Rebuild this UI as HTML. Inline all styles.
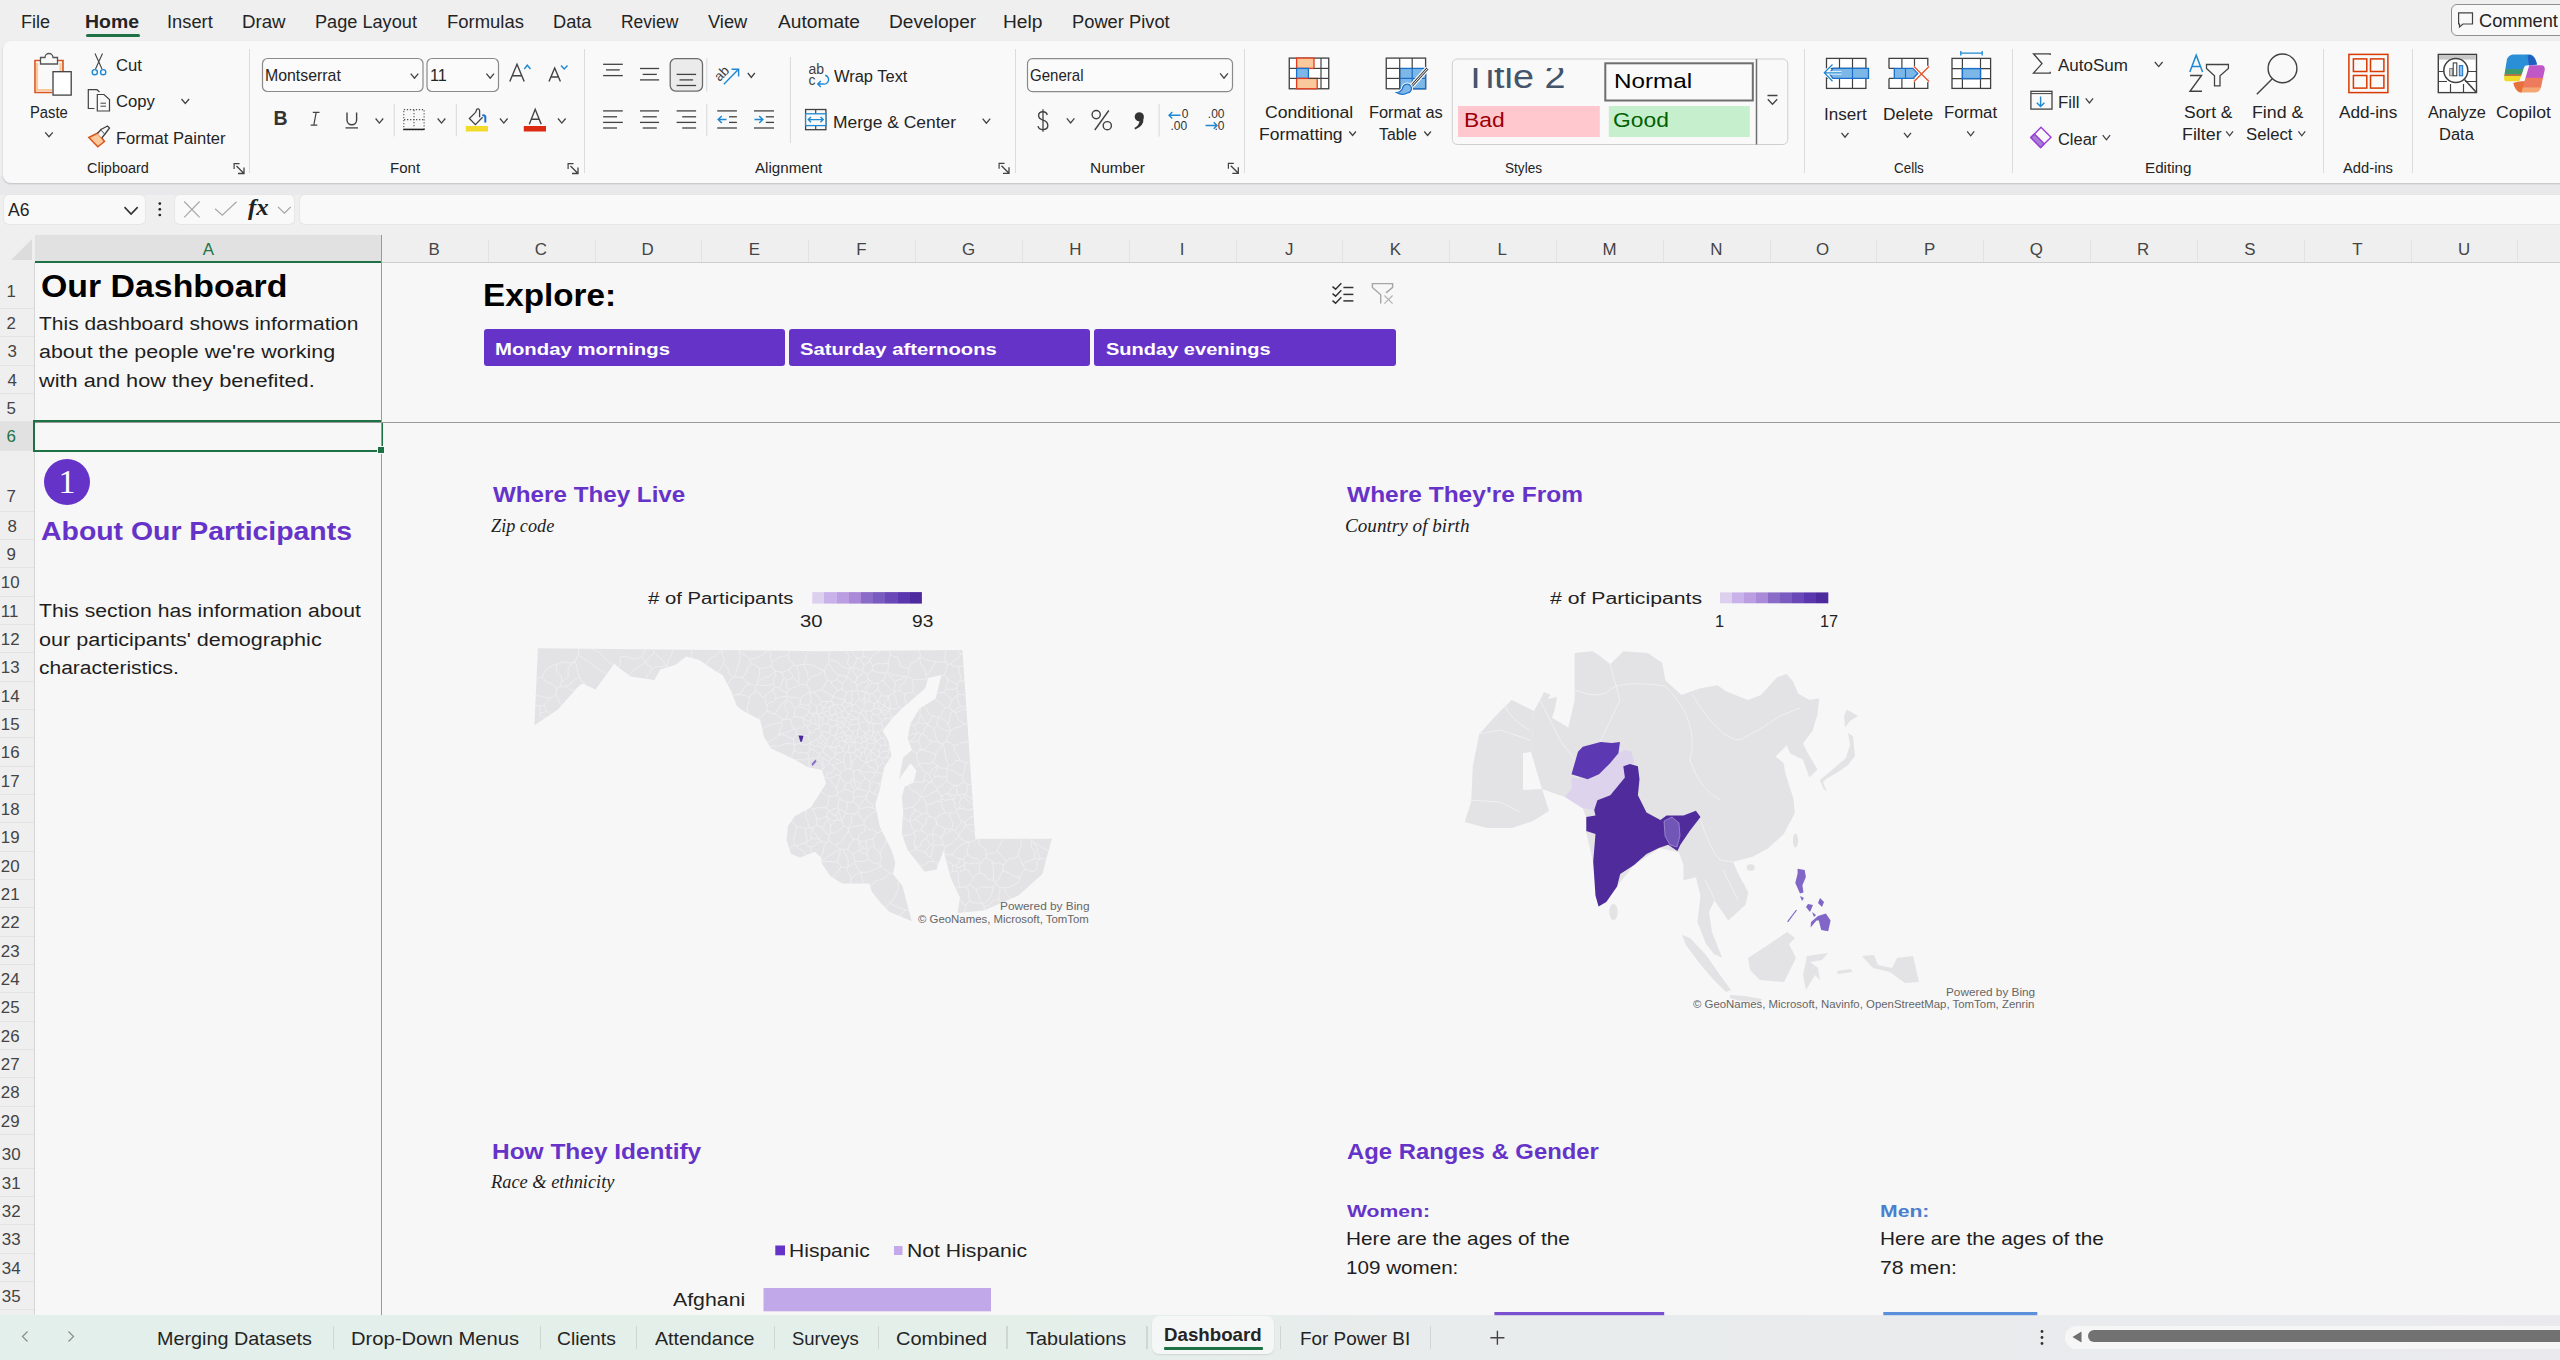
<!DOCTYPE html>
<html><head><meta charset="utf-8"><style>
html,body{margin:0;padding:0;width:2560px;height:1360px;overflow:hidden;background:#efeff0;position:relative}
.t{position:absolute;white-space:nowrap}
</style></head><body>
<div style='position:absolute;left:0px;top:176px;width:2560px;height:19px;background:#e9e9ec'></div>
<div style='position:absolute;left:3px;top:41px;width:2600px;height:141.5px;background:#f9f9f9;border-radius:8px;box-shadow:0 1px 2px rgba(0,0,0,0.18)'></div>
<div style='position:absolute;left:86px;top:34px;width:54px;height:3px;background:#1e7145;border-radius:2px'></div>
<div style='position:absolute;left:2450.5px;top:3.8px;width:140px;height:32px;border:1.2px solid #8f8f8f;border-radius:6px;background:#f8f8f8;box-sizing:border-box'></div>
<div style='position:absolute;left:249.3px;top:49px;width:1px;height:124px;background:#dcdcdc'></div>
<div style='position:absolute;left:583.5px;top:49px;width:1px;height:124px;background:#dcdcdc'></div>
<div style='position:absolute;left:1014.8px;top:49px;width:1px;height:124px;background:#dcdcdc'></div>
<div style='position:absolute;left:1243.8px;top:49px;width:1px;height:124px;background:#dcdcdc'></div>
<div style='position:absolute;left:1804.2px;top:49px;width:1px;height:124px;background:#dcdcdc'></div>
<div style='position:absolute;left:2012.3px;top:49px;width:1px;height:124px;background:#dcdcdc'></div>
<div style='position:absolute;left:2323.2px;top:49px;width:1px;height:124px;background:#dcdcdc'></div>
<div style='position:absolute;left:2412.2px;top:49px;width:1px;height:124px;background:#dcdcdc'></div>
<div style='position:absolute;left:4px;top:195px;width:141px;height:29px;background:#f9f9f9;border-radius:5px;box-shadow:0 0 0 1px #e6e6e6'></div>
<div style='position:absolute;left:175px;top:195px;width:119px;height:29px;background:#f9f9f9;border-radius:5px;box-shadow:0 0 0 1px #e6e6e6'></div>
<div style='position:absolute;left:300px;top:195px;width:2300px;height:29px;background:#f9f9f9;border-radius:5px;box-shadow:0 0 0 1px #e6e6e6'></div>
<div style='position:absolute;left:35px;top:262.5px;width:2525px;height:1053px;background:#f7f7f7'></div>
<div style='position:absolute;left:35px;top:235px;width:346px;height:27px;background:#e1e1e1'></div>
<div style='position:absolute;left:35px;top:260.5px;width:346px;height:2px;background:#1e7145'></div>
<div style='position:absolute;left:381px;top:262px;width:2179px;height:1px;background:#cfcfcf'></div>
<div style='position:absolute;left:487.82px;top:240px;width:1px;height:22px;background:#e2e2e2'></div>
<div style='position:absolute;left:594.64px;top:240px;width:1px;height:22px;background:#e2e2e2'></div>
<div style='position:absolute;left:701.46px;top:240px;width:1px;height:22px;background:#e2e2e2'></div>
<div style='position:absolute;left:808.28px;top:240px;width:1px;height:22px;background:#e2e2e2'></div>
<div style='position:absolute;left:915.0999999999999px;top:240px;width:1px;height:22px;background:#e2e2e2'></div>
<div style='position:absolute;left:1021.92px;top:240px;width:1px;height:22px;background:#e2e2e2'></div>
<div style='position:absolute;left:1128.74px;top:240px;width:1px;height:22px;background:#e2e2e2'></div>
<div style='position:absolute;left:1235.56px;top:240px;width:1px;height:22px;background:#e2e2e2'></div>
<div style='position:absolute;left:1342.3799999999999px;top:240px;width:1px;height:22px;background:#e2e2e2'></div>
<div style='position:absolute;left:1449.1999999999998px;top:240px;width:1px;height:22px;background:#e2e2e2'></div>
<div style='position:absolute;left:1556.02px;top:240px;width:1px;height:22px;background:#e2e2e2'></div>
<div style='position:absolute;left:1662.84px;top:240px;width:1px;height:22px;background:#e2e2e2'></div>
<div style='position:absolute;left:1769.6599999999999px;top:240px;width:1px;height:22px;background:#e2e2e2'></div>
<div style='position:absolute;left:1876.48px;top:240px;width:1px;height:22px;background:#e2e2e2'></div>
<div style='position:absolute;left:1983.3px;top:240px;width:1px;height:22px;background:#e2e2e2'></div>
<div style='position:absolute;left:2090.12px;top:240px;width:1px;height:22px;background:#e2e2e2'></div>
<div style='position:absolute;left:2196.9399999999996px;top:240px;width:1px;height:22px;background:#e2e2e2'></div>
<div style='position:absolute;left:2303.7599999999998px;top:240px;width:1px;height:22px;background:#e2e2e2'></div>
<div style='position:absolute;left:2410.58px;top:240px;width:1px;height:22px;background:#e2e2e2'></div>
<div style='position:absolute;left:2517.3999999999996px;top:240px;width:1px;height:22px;background:#e2e2e2'></div>
<div style='position:absolute;left:34px;top:262px;width:1px;height:1053px;background:#d6d6d6'></div>
<div style='position:absolute;left:0px;top:308.0px;width:34px;height:1px;background:#e3e3e3'></div>
<div style='position:absolute;left:0px;top:336.33299999999997px;width:34px;height:1px;background:#e3e3e3'></div>
<div style='position:absolute;left:0px;top:364.66599999999994px;width:34px;height:1px;background:#e3e3e3'></div>
<div style='position:absolute;left:0px;top:392.9989999999999px;width:34px;height:1px;background:#e3e3e3'></div>
<div style='position:absolute;left:0px;top:421.3319999999999px;width:34px;height:1px;background:#e3e3e3'></div>
<div style='position:absolute;left:0px;top:449.66499999999985px;width:34px;height:1px;background:#e3e3e3'></div>
<div style='position:absolute;left:0px;top:510.66499999999985px;width:34px;height:1px;background:#e3e3e3'></div>
<div style='position:absolute;left:0px;top:538.9979999999998px;width:34px;height:1px;background:#e3e3e3'></div>
<div style='position:absolute;left:0px;top:567.3309999999998px;width:34px;height:1px;background:#e3e3e3'></div>
<div style='position:absolute;left:0px;top:595.6639999999998px;width:34px;height:1px;background:#e3e3e3'></div>
<div style='position:absolute;left:0px;top:623.9969999999997px;width:34px;height:1px;background:#e3e3e3'></div>
<div style='position:absolute;left:0px;top:652.3299999999997px;width:34px;height:1px;background:#e3e3e3'></div>
<div style='position:absolute;left:0px;top:680.6629999999997px;width:34px;height:1px;background:#e3e3e3'></div>
<div style='position:absolute;left:0px;top:708.9959999999996px;width:34px;height:1px;background:#e3e3e3'></div>
<div style='position:absolute;left:0px;top:737.3289999999996px;width:34px;height:1px;background:#e3e3e3'></div>
<div style='position:absolute;left:0px;top:765.6619999999996px;width:34px;height:1px;background:#e3e3e3'></div>
<div style='position:absolute;left:0px;top:793.9949999999995px;width:34px;height:1px;background:#e3e3e3'></div>
<div style='position:absolute;left:0px;top:822.3279999999995px;width:34px;height:1px;background:#e3e3e3'></div>
<div style='position:absolute;left:0px;top:850.6609999999995px;width:34px;height:1px;background:#e3e3e3'></div>
<div style='position:absolute;left:0px;top:878.9939999999995px;width:34px;height:1px;background:#e3e3e3'></div>
<div style='position:absolute;left:0px;top:907.3269999999994px;width:34px;height:1px;background:#e3e3e3'></div>
<div style='position:absolute;left:0px;top:935.6599999999994px;width:34px;height:1px;background:#e3e3e3'></div>
<div style='position:absolute;left:0px;top:963.9929999999994px;width:34px;height:1px;background:#e3e3e3'></div>
<div style='position:absolute;left:0px;top:992.3259999999993px;width:34px;height:1px;background:#e3e3e3'></div>
<div style='position:absolute;left:0px;top:1020.6589999999993px;width:34px;height:1px;background:#e3e3e3'></div>
<div style='position:absolute;left:0px;top:1048.9919999999993px;width:34px;height:1px;background:#e3e3e3'></div>
<div style='position:absolute;left:0px;top:1077.3249999999994px;width:34px;height:1px;background:#e3e3e3'></div>
<div style='position:absolute;left:0px;top:1105.6579999999994px;width:34px;height:1px;background:#e3e3e3'></div>
<div style='position:absolute;left:0px;top:1133.9909999999995px;width:34px;height:1px;background:#e3e3e3'></div>
<div style='position:absolute;left:0px;top:1167.5909999999994px;width:34px;height:1px;background:#e3e3e3'></div>
<div style='position:absolute;left:0px;top:1195.9239999999995px;width:34px;height:1px;background:#e3e3e3'></div>
<div style='position:absolute;left:0px;top:1224.2569999999996px;width:34px;height:1px;background:#e3e3e3'></div>
<div style='position:absolute;left:0px;top:1252.5899999999997px;width:34px;height:1px;background:#e3e3e3'></div>
<div style='position:absolute;left:0px;top:1280.9229999999998px;width:34px;height:1px;background:#e3e3e3'></div>
<div style='position:absolute;left:0px;top:1309.2559999999999px;width:34px;height:1px;background:#e3e3e3'></div>
<div style='position:absolute;left:0px;top:421.8319999999999px;width:34px;height:27.83299999999997px;background:#e1e1e1'></div>
<svg style='position:absolute;left:11px;top:239px' width='22' height='21'><polygon points='21,0 21,21 0,21' fill='#dcdcdc'/></svg>
<div style='position:absolute;left:33px;top:420.2px;width:348.5px;height:2px;background:#1e7145'></div>
<div style='position:absolute;left:33px;top:420.2px;width:2px;height:31.4px;background:#1e7145'></div>
<div style='position:absolute;left:33px;top:449.6px;width:344px;height:2px;background:#1e7145'></div>
<div style='position:absolute;left:381.8px;top:422px;width:1.3px;height:24.5px;background:#1e7145'></div>
<div style='position:absolute;left:380.6px;top:235px;width:1.4px;height:1080px;background:#9a9a9a'></div>
<div style='position:absolute;left:35px;top:421.9px;width:2525px;height:1.3px;background:#9a9a9a'></div>
<div style='position:absolute;left:377.8px;top:446.9px;width:6px;height:6px;background:#1e7145;box-shadow:0 0 0 1px #f7f7f7'></div>
<div style='position:absolute;left:484px;top:329px;width:301.20000000000005px;height:36.6px;background:#6633c9;border-radius:3px'></div>
<div style='position:absolute;left:789px;top:329px;width:301px;height:36.6px;background:#6633c9;border-radius:3px'></div>
<div style='position:absolute;left:1094px;top:329px;width:301.70000000000005px;height:36.6px;background:#6633c9;border-radius:3px'></div>
<div style='position:absolute;left:44px;top:459px;width:46px;height:46px;border-radius:50%;background:#6633c9'></div>
<div style='position:absolute;left:44px;top:459px;width:46px;height:46px;text-align:center;line-height:46px;font-family:"Liberation Serif",serif;font-size:34px;color:#fff'>1</div>
<div style='position:absolute;left:0px;top:1315px;width:2560px;height:45px;background:linear-gradient(90deg,#e3efea 0%,#e4efea 40%,#e8ecec 55%,#eaeaee 100%)'></div>
<div style='position:absolute;left:1152px;top:1315.8px;width:122px;height:38.5px;background:#f5f6f6;border-radius:7px;box-shadow:0 1px 1.5px rgba(0,0,0,0.10)'></div>
<div style='position:absolute;left:1164px;top:1347.3px;width:98.5px;height:2.7px;background:#1e7145;border-radius:1px'></div>
<div style='position:absolute;left:332.8px;top:1326px;width:1.2px;height:23px;background:#cfd6d3'></div>
<div style='position:absolute;left:540px;top:1326px;width:1.2px;height:23px;background:#cfd6d3'></div>
<div style='position:absolute;left:636px;top:1326px;width:1.2px;height:23px;background:#cfd6d3'></div>
<div style='position:absolute;left:774px;top:1326px;width:1.2px;height:23px;background:#cfd6d3'></div>
<div style='position:absolute;left:878px;top:1326px;width:1.2px;height:23px;background:#cfd6d3'></div>
<div style='position:absolute;left:1006.4px;top:1326px;width:1.2px;height:23px;background:#cfd6d3'></div>
<div style='position:absolute;left:1146.4px;top:1326px;width:1.2px;height:23px;background:#cfd6d3'></div>
<div style='position:absolute;left:1280px;top:1326px;width:1.2px;height:23px;background:#cfd6d3'></div>
<div style='position:absolute;left:1429.7px;top:1326px;width:1.2px;height:23px;background:#cfd6d3'></div>
<div style='position:absolute;left:2065px;top:1326px;width:600px;height:23px;background:#f6f6f6;border-radius:12px'></div>
<div style='position:absolute;left:2088px;top:1330.4px;width:600px;height:12px;background:#727272;border-radius:6px'></div>
<svg style='position:absolute;left:0;top:0' width='2560' height='1360'><path d='M40,60.5 H35 V92.5 H52' fill='none' stroke='#d9541e' stroke-width='1.6' />
<path d='M37,63 V90 H52' fill='none' stroke='#fbc89a' stroke-width='2.2' />
<path d='M58,60.5 H63 V71' fill='none' stroke='#d9541e' stroke-width='1.6' />
<path d='M60.5,63 V71' fill='none' stroke='#fbc89a' stroke-width='2.2' />
<path d='M40.5,64 V57.5 H45 A4,4 0 0 1 53,57.5 H57.5 V64 Z' fill='#f9f9f9' stroke='#555' stroke-width='1.3' />
<rect x='53' y='71.7' width='18.2' height='23.4' rx='0' fill='#fff' stroke='#404040' stroke-width='1.3' />
<polyline points='45.2,132.3 49.0,136.7 52.8,132.3' fill='none' stroke='#424242' stroke-width='1.3'/>
<path d='M95,53.5 L102,69 M102.5,53.5 L95.5,69' fill='none' stroke='#424242' stroke-width='1.1' />
<circle cx='94.8' cy='72.2' r='2.6' fill='none' stroke='#1e88d4' stroke-width='1.4'/>
<circle cx='103.2' cy='72.2' r='2.6' fill='none' stroke='#1e88d4' stroke-width='1.4'/>
<path d='M94.5,108.5 H88.3 V89.7 H97 L99.5,92' fill='none' stroke='#424242' stroke-width='1.2' />
<path d='M97.3,111 V94.5 H104 L109.5,99.5 V111 Z' fill='#f9f9f9' stroke='#424242' stroke-width='1.2' />
<path d='M100.5,103.2 H106 M100.5,106.2 H106' fill='none' stroke='#424242' stroke-width='1.0' />
<polyline points='181.5,99.0 185.3,103.4 189.1,99.0' fill='none' stroke='#424242' stroke-width='1.3'/>
<path d='M88.8,137.5 L97.8,133 L104.5,141.5 L97.8,146.8 Z' fill='#fbc89a' stroke='#d9541e' stroke-width='1.5' />
<path d='M97.5,133.5 L101,129.5 L105,134 L101.8,138' fill='#f9f9f9' stroke='#404040' stroke-width='1.3' />
<path d='M101,129.5 L107.5,126 L109.5,128 L105,134' fill='#f9f9f9' stroke='#404040' stroke-width='1.3' />
<path d='M234.1,169 V163.6 H239.5' fill='none' stroke='#424242' stroke-width='1.2' /><path d='M236.5,166 L244.0,173.5 M244.0,167.5 V173.5 H238.0' fill='none' stroke='#424242' stroke-width='1.3' />
<rect x='262.5' y='58.5' width='160.5' height='33' rx='5' fill='#fbfbfb' stroke='#8a8a8a' stroke-width='1.2' />
<rect x='427' y='58.5' width='71.5' height='33' rx='5' fill='#fbfbfb' stroke='#8a8a8a' stroke-width='1.2' />
<polyline points='410.7,73.6 414.5,78.2 418.3,73.6' fill='none' stroke='#424242' stroke-width='1.3'/>
<polyline points='486.4,73.6 490.2,78.2 494.0,73.6' fill='none' stroke='#424242' stroke-width='1.3'/>
<path d='M509.8,81.6 L517,64.3 L524.2,81.6 M512.3,75.8 H521.7' fill='none' stroke='#424242' stroke-width='1.4' />
<path d='M524.3,69 L527.3,65.2 L530.5,69' fill='none' stroke='#1e88d4' stroke-width='1.4' />
<path d='M549,81.6 L554.7,68 L560.4,81.6 M551,77 H558.4' fill='none' stroke='#424242' stroke-width='1.4' />
<path d='M561,65.6 L564.2,69 L567.5,65.6' fill='none' stroke='#1e88d4' stroke-width='1.4' />
<text x='273.5' y='125.4' font-family='Liberation Sans' font-weight='700' font-size='19.5' fill='#333'>B</text>
<path d='M316.2,112.3 L313.8,125.1 M312.8,112.3 H319.5 M310.7,125.1 H317.3' fill='none' stroke='#424242' stroke-width='1.2' />
<path d='M347,112.5 V120 A4.8,4.8 0 0 0 356.6,120 V112.5' fill='none' stroke='#424242' stroke-width='1.4' />
<line x1='345.5' y1='127.9' x2='358' y2='127.9' stroke='#424242' stroke-width='1.3' />
<polyline points='375.6,118.5 379.4,123.1 383.2,118.5' fill='none' stroke='#424242' stroke-width='1.3'/>
<line x1='394.2' y1='104' x2='394.2' y2='136.4' stroke='#d8d8d8' stroke-width='1' />
<rect x='403.8' y='109.6' width='20.3' height='20' rx='0' fill='none' stroke='#555' stroke-width='1.1' stroke-dasharray='1.3,1.7'/>
<line x1='414' y1='110' x2='414' y2='128' stroke='#555' stroke-width='1.1' stroke-dasharray='1.3,1.7'/>
<line x1='404' y1='119.6' x2='424' y2='119.6' stroke='#555' stroke-width='1.1' stroke-dasharray='1.3,1.7'/>
<line x1='403.3' y1='129.4' x2='424.6' y2='129.4' stroke='#222' stroke-width='1.5' />
<polyline points='437.7,118.5 441.5,123.1 445.3,118.5' fill='none' stroke='#424242' stroke-width='1.3'/>
<line x1='456.3' y1='104' x2='456.3' y2='136.4' stroke='#d8d8d8' stroke-width='1' />
<path d='M475.6,112.4 L469.4,118.5 L475.4,124.6 L482.6,117.2' fill='none' stroke='#424242' stroke-width='1.3' />
<path d='M475.6,112.4 L476.5,110 A1.6,1.6 0 0 1 479.6,110.5 V117.2' fill='none' stroke='#424242' stroke-width='1.3' />
<path d='M482.3,115.6 A2.2,2.2 0 0 1 485.3,116.5 V122.4' fill='none' stroke='#1a6fcf' stroke-width='2' />
<rect x='465.8' y='126' width='22.2' height='5.5' rx='0' fill='#f1da2a' stroke='none' stroke-width='0' />
<polyline points='500.0,118.5 503.8,123.1 507.6,118.5' fill='none' stroke='#424242' stroke-width='1.3'/>
<path d='M529.3,124.2 L535.2,109.3 L541.2,124.2 M531.4,119.2 H539' fill='none' stroke='#424242' stroke-width='1.4' />
<rect x='523.8' y='126' width='22.2' height='5.5' rx='0' fill='#dd2a12' stroke='none' stroke-width='0' />
<polyline points='558.0,118.5 561.8,123.1 565.6,118.5' fill='none' stroke='#424242' stroke-width='1.3'/>
<path d='M568.1,169 V163.6 H573.5' fill='none' stroke='#424242' stroke-width='1.2' /><path d='M570.5,166 L578.0,173.5 M578.0,167.5 V173.5 H572.0' fill='none' stroke='#424242' stroke-width='1.3' />
<line x1='603.1' y1='64.3' x2='622.8' y2='64.3' stroke='#424242' stroke-width='1.3' />
<line x1='606' y1='69.9' x2='619.8' y2='69.9' stroke='#424242' stroke-width='1.3' />
<line x1='603.1' y1='75.6' x2='622.8' y2='75.6' stroke='#424242' stroke-width='1.3' />
<line x1='640' y1='68.5' x2='659.1' y2='68.5' stroke='#424242' stroke-width='1.3' />
<line x1='642.7' y1='74.4' x2='656.8' y2='74.4' stroke='#424242' stroke-width='1.3' />
<line x1='640' y1='79.9' x2='659.1' y2='79.9' stroke='#424242' stroke-width='1.3' />
<rect x='670.2' y='58.6' width='32.3' height='32.5' rx='5.5' fill='#ebebeb' stroke='#6b6b6b' stroke-width='1.3' />
<line x1='676.6' y1='74.4' x2='696.1' y2='74.4' stroke='#424242' stroke-width='1.3' />
<line x1='679.5' y1='79.9' x2='693.1' y2='79.9' stroke='#424242' stroke-width='1.3' />
<line x1='676.6' y1='85.5' x2='696.1' y2='85.5' stroke='#424242' stroke-width='1.3' />
<line x1='706.8' y1='58.2' x2='706.8' y2='91.4' stroke='#d8d8d8' stroke-width='1' />
<text x='0' y='0' font-family='Liberation Sans' font-size='13.5' fill='#404040' transform='translate(719.5,82) rotate(-45)'>ab</text>
<path d='M723.8,84.2 L738.3,69.6 M731.5,69.3 H738.6 V76.4' fill='none' stroke='#1e88d4' stroke-width='1.4' />
<polyline points='747.8,73.0 751.3,77.4 754.8,73.0' fill='none' stroke='#424242' stroke-width='1.3'/>
<line x1='603.1' y1='110.9' x2='622.8' y2='110.9' stroke='#424242' stroke-width='1.3' />
<line x1='603.1' y1='116.8' x2='617' y2='116.8' stroke='#424242' stroke-width='1.3' />
<line x1='603.1' y1='122.4' x2='622.8' y2='122.4' stroke='#424242' stroke-width='1.3' />
<line x1='603.1' y1='128' x2='617' y2='128' stroke='#424242' stroke-width='1.3' />
<line x1='640' y1='110.9' x2='659.1' y2='110.9' stroke='#424242' stroke-width='1.3' />
<line x1='642.7' y1='116.8' x2='656.8' y2='116.8' stroke='#424242' stroke-width='1.3' />
<line x1='640' y1='122.4' x2='659.1' y2='122.4' stroke='#424242' stroke-width='1.3' />
<line x1='642.7' y1='128' x2='656.8' y2='128' stroke='#424242' stroke-width='1.3' />
<line x1='676.6' y1='110.9' x2='696.1' y2='110.9' stroke='#424242' stroke-width='1.3' />
<line x1='682.2' y1='116.8' x2='696.1' y2='116.8' stroke='#424242' stroke-width='1.3' />
<line x1='676.6' y1='122.4' x2='696.1' y2='122.4' stroke='#424242' stroke-width='1.3' />
<line x1='682.2' y1='128' x2='696.1' y2='128' stroke='#424242' stroke-width='1.3' />
<line x1='706.8' y1='103.9' x2='706.8' y2='136.3' stroke='#d8d8d8' stroke-width='1' />
<line x1='717.2' y1='110.9' x2='736.9' y2='110.9' stroke='#424242' stroke-width='1.3' />
<line x1='729' y1='116.8' x2='736.9' y2='116.8' stroke='#424242' stroke-width='1.3' />
<line x1='729' y1='122.4' x2='736.9' y2='122.4' stroke='#424242' stroke-width='1.3' />
<line x1='717.2' y1='128' x2='736.9' y2='128' stroke='#424242' stroke-width='1.3' />
<path d='M726.5,119.5 H718.5 M721.8,116 L718.2,119.5 L721.8,123' fill='none' stroke='#1e88d4' stroke-width='1.5' />
<line x1='754' y1='110.9' x2='774' y2='110.9' stroke='#424242' stroke-width='1.3' />
<line x1='765.8' y1='116.8' x2='774' y2='116.8' stroke='#424242' stroke-width='1.3' />
<line x1='765.8' y1='122.4' x2='774' y2='122.4' stroke='#424242' stroke-width='1.3' />
<line x1='754' y1='128' x2='774' y2='128' stroke='#424242' stroke-width='1.3' />
<path d='M754.5,119.5 H762.5 M759.2,116 L762.8,119.5 L759.2,123' fill='none' stroke='#1e88d4' stroke-width='1.5' />
<line x1='790.4' y1='57' x2='790.4' y2='143' stroke='#d8d8d8' stroke-width='1' />
<text x='808.4' y='74.2' font-family='Liberation Sans' font-size='14' fill='#404040'>ab</text>
<text x='808.4' y='84.8' font-family='Liberation Sans' font-size='14' fill='#404040'>c</text>
<path d='M825.2,75.2 A4.5,4.5 0 0 1 823,84 H818 M820.8,81 L817.8,84 L820.8,87' fill='none' stroke='#1e88d4' stroke-width='1.4' />
<rect x='805.6' y='109.5' width='20.3' height='20.2' rx='0' fill='#f9f9f9' stroke='#404040' stroke-width='1.3' />
<line x1='815.7' y1='109.5' x2='815.7' y2='129.7' stroke='#424242' stroke-width='1.2' />
<rect x='805.6' y='113.8' width='20.3' height='11.8' rx='0' fill='#f9f9f9' stroke='#1e88d4' stroke-width='1.3' />
<path d='M808.5,119.6 H823 M811,117 L808.3,119.6 L811,122.2 M820.5,117 L823.2,119.6 L820.5,122.2' fill='none' stroke='#1e88d4' stroke-width='1.4' />
<polyline points='982.6,118.6 986.4,123.2 990.2,118.6' fill='none' stroke='#424242' stroke-width='1.3'/>
<path d='M999.1,168.8 V163.4 H1004.5' fill='none' stroke='#424242' stroke-width='1.2' /><path d='M1001.5,165.8 L1009.0,173.3 M1009.0,167.3 V173.3 H1003.0' fill='none' stroke='#424242' stroke-width='1.3' />
<rect x='1027.5' y='58.6' width='205' height='33' rx='5' fill='#fbfbfb' stroke='#8a8a8a' stroke-width='1.2' />
<polyline points='1220.1,73.4 1224.0,78.2 1227.9,73.4' fill='none' stroke='#424242' stroke-width='1.3'/>
<path d='M1047.2,115 Q1046.5,111.8 1043,111.8 Q1038.6,111.8 1038.6,115.6 Q1038.6,118.8 1043,120.2 Q1047.8,121.6 1047.8,125.6 Q1047.8,129.6 1043,129.6 Q1038.8,129.6 1038,126.2' fill='none' stroke='#424242' stroke-width='1.4' />
<line x1='1043' y1='109.3' x2='1043' y2='131.7' stroke='#424242' stroke-width='1.3' />
<polyline points='1066.8,118.4 1070.6,123.0 1074.4,118.4' fill='none' stroke='#424242' stroke-width='1.3'/>
<circle cx='1096.2' cy='114.6' r='4.1' fill='none' stroke='#404040' stroke-width='1.4'/>
<circle cx='1107.3' cy='125.7' r='4.1' fill='none' stroke='#404040' stroke-width='1.4'/>
<line x1='1108.8' y1='110.5' x2='1094.8' y2='130' stroke='#424242' stroke-width='1.4' />
<circle cx='1139.3' cy='116.8' r='4.6' fill='#333'/>
<path d='M1143.4,118 Q1144.3,126 1135.2,129.4 L1134.4,128 Q1139.5,125 1139.8,120 Z' fill='#333' stroke='none' stroke-width='1.3' />
<line x1='1159.1' y1='104' x2='1159.1' y2='136.5' stroke='#d8d8d8' stroke-width='1' />
<text x='1181.8' y='118.4' font-family='Liberation Sans' font-size='12' fill='#333'>0</text>
<text x='1170.5' y='129.8' font-family='Liberation Sans' font-size='12' fill='#333'>.00</text>
<path d='M1180.5,115.3 H1169 M1172.3,112 L1169,115.3 L1172.3,118.6' fill='none' stroke='#1e88d4' stroke-width='1.4' />
<text x='1207.8' y='118.4' font-family='Liberation Sans' font-size='12' fill='#333'>.00</text>
<text x='1214.5' y='129.8' font-family='Liberation Sans' font-size='12' fill='#333'>.0</text>
<path d='M1205.5,125.5 H1217 M1213.7,122.2 L1217,125.5 L1213.7,128.8' fill='none' stroke='#1e88d4' stroke-width='1.4' />
<path d='M1228.3999999999999,168.8 V163.4 H1233.8' fill='none' stroke='#424242' stroke-width='1.2' /><path d='M1230.8,165.8 L1238.3,173.3 M1238.3,167.3 V173.3 H1232.3' fill='none' stroke='#424242' stroke-width='1.3' />
<rect x='1289.25' y='58.1' width='39.5' height='30.65' rx='0' fill='#fff' stroke='#404040' stroke-width='1.3' />
<rect x='1296.6' y='58.1' width='17.4' height='10.3' rx='0' fill='#f9c89b' stroke='#e63a1e' stroke-width='1.3' />
<rect x='1296.6' y='68.4' width='11.8' height='10' rx='0' fill='#7db7e8' stroke='#1a6fc9' stroke-width='1.3' />
<rect x='1296.6' y='78.4' width='20.6' height='10.35' rx='0' fill='#f9c89b' stroke='#e63a1e' stroke-width='1.3' />
<line x1='1289.25' y1='68.4' x2='1296.6' y2='68.4' stroke='#424242' stroke-width='1.2' />
<line x1='1314' y1='68.4' x2='1328.75' y2='68.4' stroke='#424242' stroke-width='1.2' />
<line x1='1289.25' y1='78.4' x2='1296.6' y2='78.4' stroke='#424242' stroke-width='1.2' />
<line x1='1308.4' y1='78.4' x2='1328.75' y2='78.4' stroke='#424242' stroke-width='1.2' />
<line x1='1321' y1='58.1' x2='1321' y2='88.75' stroke='#424242' stroke-width='1.2' />
<rect x='1386.25' y='58.1' width='39.35' height='30.65' rx='0' fill='#fff' stroke='#404040' stroke-width='1.3' />
<rect x='1399.7' y='68.4' width='25.9' height='20.35' rx='0' fill='#7db7e8' stroke='#1a6fc9' stroke-width='1.3' />
<line x1='1399.7' y1='58.1' x2='1399.7' y2='88.75' stroke='#424242' stroke-width='1.2' />
<line x1='1412.2' y1='58.1' x2='1412.2' y2='68.4' stroke='#424242' stroke-width='1.2' />
<line x1='1386.25' y1='68.4' x2='1399.7' y2='68.4' stroke='#424242' stroke-width='1.2' />
<line x1='1386.25' y1='78.4' x2='1399.7' y2='78.4' stroke='#424242' stroke-width='1.2' />
<line x1='1412.2' y1='68.4' x2='1412.2' y2='88.75' stroke='#1a6fc9' stroke-width='1.2' />
<line x1='1399.7' y1='78.4' x2='1425.6' y2='78.4' stroke='#1a6fc9' stroke-width='1.2' />
<path d='M1427.5,68.5 L1412,85.5' fill='none' stroke='#fff' stroke-width='5' />
<path d='M1427.5,68.5 L1412,85.5' fill='none' stroke='#404040' stroke-width='2.6' />
<path d='M1427.5,68.5 L1412,85.5' fill='none' stroke='#fff' stroke-width='1.0' />
<path d='M1410.8,86 A4.6,4.6 0 0 0 1402.5,88.5 Q1400.5,92.5 1396.5,92.5 Q1402,96 1407.5,93 A4.6,4.6 0 0 0 1410.8,86 Z' fill='#fff' stroke='#fff' stroke-width='3' />
<path d='M1410.8,86 A4.6,4.6 0 0 0 1402.5,88.5 Q1400.5,92.5 1396.5,92.5 Q1402,96 1407.5,93 A4.6,4.6 0 0 0 1410.8,86 Z' fill='#7db7e8' stroke='#1a6fc9' stroke-width='1.2' />
<polyline points='1349.3,131.5 1352.6,135.5 1355.9,131.5' fill='none' stroke='#424242' stroke-width='1.3'/>
<polyline points='1424.3,131.5 1427.6,135.5 1430.9,131.5' fill='none' stroke='#424242' stroke-width='1.3'/>
<rect x='1452.3' y='59' width='335.5' height='85.5' rx='5' fill='#f9f9f9' stroke='#cfcfcf' stroke-width='1' />
<rect x='1458' y='106' width='141.8' height='31' rx='0' fill='#ffc7ce' stroke='none' stroke-width='0' />
<rect x='1608.8' y='106' width='141' height='31' rx='0' fill='#c6efce' stroke='none' stroke-width='0' />
<rect x='1605.3' y='63.3' width='147.5' height='37.2' rx='0' fill='#fafafa' stroke='#6e6e6e' stroke-width='2' />
<path d='M1756.5,59 V144.5' fill='none' stroke='#6e6e6e' stroke-width='1.5' />
<path d='M1767.5,95.5 H1777.5 M1767.8,99.2 L1772.5,104.3 L1777.2,99.2' fill='none' stroke='#424242' stroke-width='1.3' />
<rect x='1826.5' y='58.4' width='39.40000000000009' height='30.000000000000007' rx='0' fill='#fff' stroke='#404040' stroke-width='1.3' /><line x1='1839.5' y1='58.4' x2='1839.5' y2='88.4' stroke='#404040' stroke-width='1.2' /><line x1='1852.5' y1='58.4' x2='1852.5' y2='88.4' stroke='#404040' stroke-width='1.2' /><line x1='1826.5' y1='68.4' x2='1865.9' y2='68.4' stroke='#404040' stroke-width='1.2' /><line x1='1826.5' y1='78.4' x2='1865.9' y2='78.4' stroke='#404040' stroke-width='1.2' />
<path d='M1833,68.4 H1868.5 V78.4 H1833 L1829,73.4 Z' fill='#7db7e8' stroke='#1a6fc9' stroke-width='1.3' />
<line x1='1852.5' y1='68.4' x2='1852.5' y2='78.4' stroke='#1a6fc9' stroke-width='1.2' />
<path d='M1841.5,72.8 H1825 M1832.5,64.5 L1824.3,72.8 L1832.5,81.2' fill='none' stroke='#fff' stroke-width='3.2' />
<path d='M1841.5,72.8 H1825 M1832.5,64.5 L1824.3,72.8 L1832.5,81.2' fill='none' stroke='#1e88d4' stroke-width='1.3' />
<polyline points='1841.5,132.8 1845.0,137.2 1848.5,132.8' fill='none' stroke='#424242' stroke-width='1.3'/>
<path d='M1889,68.4 V58.4 H1927.8 V68.4 M1889,78.4 V88.4 H1927.8 V78.4' fill='#fff' stroke='#404040' stroke-width='1.3' />
<path d='M1889,68.4 H1894.3 M1889,78.4 H1894.3 M1901.9,58.4 V68.4 M1914.5,58.4 V68.4 M1901.9,78.4 V88.4 M1914.5,78.4 V88.4' fill='none' stroke='#424242' stroke-width='1.2' />
<path d='M1894.3,68.4 H1913 L1917.8,73.4 L1913,78.4 H1894.3 Z' fill='#7db7e8' stroke='#1a6fc9' stroke-width='1.3' />
<line x1='1905.5' y1='68.4' x2='1905.5' y2='78.4' stroke='#1a6fc9' stroke-width='1.2' />
<path d='M1914,66.5 L1929,81.5 M1929,66.5 L1914,81.5' fill='none' stroke='#fff' stroke-width='3' />
<path d='M1914,66.5 L1929,81.5 M1929,66.5 L1914,81.5' fill='none' stroke='#e8542a' stroke-width='1.3' />
<polyline points='1904.0,132.8 1907.5,137.2 1911.0,132.8' fill='none' stroke='#424242' stroke-width='1.3'/>
<rect x='1952' y='58.4' width='38.59999999999991' height='30.000000000000007' rx='0' fill='#fff' stroke='#404040' stroke-width='1.3' /><line x1='1962.4' y1='58.4' x2='1962.4' y2='88.4' stroke='#404040' stroke-width='1.2' /><line x1='1980.5' y1='58.4' x2='1980.5' y2='88.4' stroke='#404040' stroke-width='1.2' /><line x1='1952' y1='68.6' x2='1990.6' y2='68.6' stroke='#404040' stroke-width='1.2' /><line x1='1952' y1='78.6' x2='1990.6' y2='78.6' stroke='#404040' stroke-width='1.2' />
<rect x='1962.4' y='68.6' width='18.1' height='10' rx='0' fill='#7db7e8' stroke='#1a6fc9' stroke-width='1.4' />
<path d='M1960.8,53.2 H1982.2 M1960.8,51 V55.5 M1982.2,51 V55.5' fill='none' stroke='#1e88d4' stroke-width='1.3' />
<polyline points='1967.2,131.4 1970.7,135.8 1974.2,131.4' fill='none' stroke='#424242' stroke-width='1.3'/>
<path d='M2050.2,55 V53.8 H2033.5 L2042,63.6 L2033.5,73.1 H2050.2 V71.8' fill='none' stroke='#424242' stroke-width='1.3' />
<polyline points='2154.8,62.0 2158.7,66.6 2162.6,62.0' fill='none' stroke='#424242' stroke-width='1.3'/>
<rect x='2030.9' y='91.3' width='21.1' height='17.8' rx='0' fill='none' stroke='#424242' stroke-width='1.3' />
<line x1='2031' y1='93.6' x2='2052' y2='93.6' stroke='#424242' stroke-width='1.0' />
<path d='M2040.6,96.5 V106.5 M2036.8,102.7 L2040.6,106.6 L2044.4,102.7' fill='none' stroke='#1e88d4' stroke-width='1.4' />
<polyline points='2085.7,98.3 2089.4,102.9 2093.1,98.3' fill='none' stroke='#424242' stroke-width='1.3'/>
<path d='M2041,127.2 L2051,137.2 L2040.6,147.4 L2030.8,137.6 Z' fill='none' stroke='#9b3dd6' stroke-width='1.4' />
<path d='M2034.4,134 L2044.2,143.8 L2040.6,147.4 L2030.8,137.6 Z' fill='#a77fd6' stroke='#9b3dd6' stroke-width='1.4' />
<polyline points='2102.7,135.2 2106.4,139.8 2110.1,135.2' fill='none' stroke='#424242' stroke-width='1.3'/>
<path d='M2189.8,72 L2196.2,55.2 L2202.6,72 M2192,66.5 H2200.5' fill='none' stroke='#1e88d4' stroke-width='1.5' />
<path d='M2190,75.5 H2201.5 L2190,91.3 H2202' fill='none' stroke='#424242' stroke-width='1.4' />
<path d='M2206.5,64.5 H2228.4 V68.5 L2220,75.8 V85.8 H2214.5 V75.8 L2206.5,68.5 Z' fill='none' stroke='#424242' stroke-width='1.3' />
<polyline points='2226.2,131.4 2229.6,135.8 2233.0,131.4' fill='none' stroke='#424242' stroke-width='1.3'/>
<circle cx='2282.5' cy='68.4' r='14.4' fill='none' stroke='#404040' stroke-width='1.4'/>
<line x1='2272.3' y1='78.7' x2='2256.8' y2='94.2' stroke='#424242' stroke-width='1.4' />
<polyline points='2298.4,131.4 2301.8,135.8 2305.2,131.4' fill='none' stroke='#424242' stroke-width='1.3'/>
<rect x='2348.9' y='54.4' width='39' height='38.2' rx='0' fill='none' stroke='#d83b01' stroke-width='1.5' />
<rect x='2353.4' y='58.9' width='13.4' height='12.6' rx='0' fill='none' stroke='#d83b01' stroke-width='1.5' />
<rect x='2353.4' y='75.5' width='13.4' height='12.6' rx='0' fill='none' stroke='#d83b01' stroke-width='1.5' />
<rect x='2370.5' y='58.9' width='13.4' height='12.6' rx='0' fill='none' stroke='#d83b01' stroke-width='1.5' />
<rect x='2370.5' y='75.5' width='13.4' height='12.6' rx='0' fill='none' stroke='#d83b01' stroke-width='1.5' />
<rect x='2438.3' y='54.4' width='38.2' height='38.2' rx='0' fill='#fff' stroke='#404040' stroke-width='1.4' />
<rect x='2439' y='55' width='36.8' height='4.6' rx='0' fill='#c8c8c8' stroke='none' stroke-width='0' />
<path d='M2438.3,71.5 H2444 M2467.5,71.5 H2476.5 M2438.3,81.5 H2447 M2465,81.5 H2476.5 M2450.5,84 V92.6 M2463.5,84 V92.6' fill='none' stroke='#424242' stroke-width='1.2' />
<circle cx='2455.8' cy='70.5' r='12' fill='#fff' stroke='#404040' stroke-width='1.5'/>
<line x1='2464.5' y1='79.5' x2='2476.5' y2='92.5' stroke='#424242' stroke-width='1.6' />
<rect x='2449.7' y='68.6' width='3.2' height='7.2' rx='0' fill='#d0d0d0' stroke='#666' stroke-width='0.8' />
<rect x='2453.2' y='62.9' width='3.6' height='12.9' rx='0' fill='#fff' stroke='#333' stroke-width='1.0' />
<rect x='2459.3' y='65.6' width='3.4' height='10.2' rx='0' fill='#8cc2f0' stroke='#1a6fc9' stroke-width='1.0' />
<defs><linearGradient id='cpA' x1='0' y1='0' x2='0' y2='1'><stop offset='0' stop-color='#2a8fd6'/><stop offset='0.52' stop-color='#2a8fd6'/><stop offset='0.56' stop-color='#3f9a70'/><stop offset='0.72' stop-color='#3f9a70'/><stop offset='0.74' stop-color='#b07a40'/><stop offset='0.8' stop-color='#b07a40'/><stop offset='0.82' stop-color='#f2da2a'/><stop offset='1' stop-color='#f2da2a'/></linearGradient><linearGradient id='cpB' x1='0' y1='0' x2='0' y2='1'><stop offset='0' stop-color='#c058c8'/><stop offset='0.44' stop-color='#c058c8'/><stop offset='0.48' stop-color='#ee7b5e'/><stop offset='0.78' stop-color='#ee7b5e'/><stop offset='0.84' stop-color='#f4a772'/><stop offset='1' stop-color='#f4a772'/></linearGradient></defs>
<path d='M2507,59 C2509,55.5 2511,54.6 2514,54.6 L2529,54.6 C2533,54.6 2535.5,57 2537,64.5 L2526,65.6 C2524.5,66 2523.7,68 2523,70.8 L2519.3,81.3 L2506,81.3 C2504.3,81.3 2503.8,79 2504.2,76 Z' fill='url(#cpA)' stroke='none' stroke-width='1.3' />
<path d='M2527.5,55 C2532,54.6 2535,57 2537,64.5 L2529,65.5 Z' fill='#1f5fc0' stroke='none' stroke-width='1.3' />
<path d='M2528.9,66.4 C2529.5,65.8 2530,65.3 2531,65.3 L2541.5,65.3 C2544,65.3 2545.2,67.5 2544.7,70 L2540.8,88 C2540,91 2537.5,92.6 2534.5,92.6 L2521,92.6 C2517,92.6 2514.5,88 2513.4,82.9 L2518.6,81.6 L2524.5,81.2 Z' fill='url(#cpB)' stroke='none' stroke-width='1.3' />
<path d='M2513.4,82.9 L2524.5,81.2 L2521.5,92.4 C2517.5,92 2514.8,88 2513.4,82.9 Z' fill='#e8703a' stroke='none' stroke-width='1.3' />
<polyline points='124.5,207.1 131.1,214.1 137.7,207.1' fill='none' stroke='#333' stroke-width='1.6'/>
<circle cx='159.8' cy='203.6' r='1.35' fill='#222'/>
<circle cx='159.8' cy='209.3' r='1.35' fill='#222'/>
<circle cx='159.8' cy='215' r='1.35' fill='#222'/>
<path d='M184.2,201.5 L199.6,217.3 M199.6,201.5 L184.2,217.3' fill='none' stroke='#a8a8a8' stroke-width='1.2' />
<path d='M215.1,208.7 L222.3,215.3 L236.6,201.7' fill='none' stroke='#a8a8a8' stroke-width='1.2' />
<text x='248' y='215.5' font-family='Liberation Serif' font-style='italic' font-weight='700' font-size='23' fill='#222' transform='translate(248,215.5) scale(1.08,1) translate(-248,-215.5)'>fx</text>
<polyline points='278.0,206.9 284.4,213.1 290.8,206.9' fill='none' stroke='#a0a0a0' stroke-width='1.2'/>
<path d='M2458.6,12.8 H2472.5 V24 H2463 L2459.5,27 V24 H2458.6 Z' fill='none' stroke='#424242' stroke-width='1.2' />
<path d='M1332.5,286.7 L1335.6,289.2 L1341.3,283.3' fill='none' stroke='#333' stroke-width='1.5' />
<path d='M1332.5,293.7 L1335.6,296.2 L1341.3,290.3' fill='none' stroke='#333' stroke-width='1.5' />
<path d='M1332.5,300.7 L1335.6,303.2 L1341.3,297.3' fill='none' stroke='#333' stroke-width='1.5' />
<line x1='1343.4' y1='287.5' x2='1353.4' y2='287.5' stroke='#333' stroke-width='1.5' />
<line x1='1343.4' y1='294.4' x2='1353.4' y2='294.4' stroke='#333' stroke-width='1.5' />
<line x1='1343.4' y1='300.9' x2='1353.4' y2='300.9' stroke='#333' stroke-width='1.5' />
<path d='M1386,292.9 L1392.6,287.4 V283.6 H1372.4 V287.4 L1380.7,294.8 V303.5' fill='none' stroke='#a6a6a6' stroke-width='1.4' />
<path d='M1384.4,295.5 L1392.6,303.6 M1392.6,295.5 L1384.4,303.6' fill='none' stroke='#b0b0b0' stroke-width='1.1' />
<path d='M27.5,1331.5 L22.5,1336.5 L27.5,1341.5' fill='none' stroke='#8a8a8a' stroke-width='1.2' />
<path d='M68.5,1331.5 L73.5,1336.5 L68.5,1341.5' fill='none' stroke='#8a8a8a' stroke-width='1.2' />
<path d='M1497.4,1330.8 V1344.8 M1490.4,1337.8 H1504.4' fill='none' stroke='#444' stroke-width='1.4' />
<circle cx='2042' cy='1331.5' r='1.4' fill='#333'/>
<circle cx='2042' cy='1337.5' r='1.4' fill='#333'/>
<circle cx='2042' cy='1343.5' r='1.4' fill='#333'/>
<path d='M2081.5,1331.5 V1342.5 L2072.5,1337 Z' fill='#6f6f6f' stroke='none' stroke-width='1.3' /><polygon points='537.9,648.2 825.0,651.2 962.4,650.0 975.3,838.8 1051.8,838.8 1042.4,874.1 1018.8,895.3 983.5,910.6 957.6,912.9 960.0,897.6 950.6,877.6 943.5,850.6 936.5,869.4 924.7,871.8 907.6,850.0 901.8,833.8 903.2,811.8 901.8,797.0 904.7,786.8 913.5,782.4 916.5,770.6 910.6,763.2 898.8,779.4 903.2,757.4 912.1,750.0 907.6,738.2 910.6,723.5 919.4,708.8 935.6,698.5 941.5,675.0 928.2,677.9 925.3,688.2 901.8,708.8 892.9,717.6 882.6,730.9 888.5,741.2 891.5,755.9 884.1,767.6 879.7,789.7 875.3,804.4 879.7,826.5 891.5,850.0 895.3,862.4 893.0,874.1 902.4,885.9 911.8,921.2 889.4,911.8 881.2,903.5 871.8,891.8 869.4,883.5 842.4,883.5 830.6,876.5 821.2,862.4 821.8,858.2 815.0,851.8 800.0,857.5 791.0,854.0 786.5,840.0 788.0,826.0 795.0,816.0 810.7,807.6 818.8,795.0 826.0,783.5 822.0,770.0 807.4,767.0 795.6,760.0 770.9,748.2 763.8,736.5 760.3,720.0 742.6,710.6 736.8,705.9 730.9,690.6 722.6,675.3 713.2,669.4 699.1,660.0 686.2,656.5 675.6,664.7 660.3,669.4 654.4,680.0 630.9,676.5 619.0,668.0 614.4,663.5 595.6,689.4 582.6,683.5 577.9,687.0 557.9,709.4 534.4,725.3' fill='#e3e2e4'/>
<path d='M547.1,711.3L544.9,711.8L542.8,712.6L540.6,712.8M547.1,711.3L546.0,709.4L545.0,707.4L544.1,705.5M544.1,705.5L542.7,706.0L541.3,705.8L540.0,706.5M540.6,712.8L540.0,710.7L539.8,708.6L540.0,706.5M539.8,715.6L541.8,716.1L543.4,717.5L545.5,717.8M539.8,715.6L540.6,712.8M550.5,714.4L549.6,713.1L548.3,712.3L547.1,711.3M535.7,695.8L540.8,696.0L545.7,697.8L550.8,697.9M535.3,704.9L536.8,705.8L538.5,705.7L540.0,706.5M550.8,697.9L548.3,700.2L545.9,702.6L544.1,705.5M536.5,678.1L538.3,677.7L540.1,677.1L542.0,677.2M542.0,677.2L543.6,674.8L544.3,671.8L546.2,669.5M546.2,669.5L548.8,667.6L551.8,666.3L554.6,664.5M556.5,664.7L556.2,671.1L561.3,675.9L561.5,682.2M556.5,664.7L562.3,661.9L568.7,663.0L574.8,661.9M574.8,661.9L568.2,667.2L568.1,676.9L561.5,682.2M963.6,782.6L963.5,780.2L962.1,778.0L962.6,775.5M963.6,782.6L964.9,783.2L966.4,783.4L967.6,784.3M967.6,784.3L968.9,784.5L970.3,784.3L971.6,784.5M962.6,775.5L964.5,771.4L964.7,766.7L966.9,762.7M966.9,762.7L970.0,761.8M1019.2,882.1L1018.9,880.5L1019.3,878.9L1019.9,877.3M1019.9,877.3L1021.1,874.5L1022.4,871.8L1024.6,869.6M1034.5,871.4L1031.0,871.5L1027.9,870.1L1024.6,869.6M613.3,665.0L605.8,659.9L600.0,652.5L591.5,648.8M606.5,674.4L597.2,668.1L588.2,661.4L578.8,655.3M578.9,648.6L578.6,650.8L578.3,653.0L578.8,655.3M620.8,656.6L619.8,660.2L620.4,664.1L618.4,667.4M554.6,664.5L556.5,664.7M574.8,661.9L575.0,661.7M575.0,661.7L576.2,659.5L576.8,657.0L578.8,655.3M967.6,784.3L966.7,787.4L967.3,790.7L965.7,793.6M972.6,799.4L970.4,797.6L967.6,796.5L965.8,794.2M965.7,793.6L965.8,794.2M963.6,782.6L961.1,783.0L959.3,785.3L956.7,785.6M956.7,785.6L956.6,788.3L956.7,790.9L957.2,793.5M957.2,793.5L958.7,794.8M965.7,793.6L963.5,794.4L961.0,794.2L958.7,794.8M1019.2,882.1L1014.5,884.7L1009.7,886.8L1004.5,887.9M1010.8,898.8L1008.1,895.5L1005.3,892.3L1004.5,887.9M919.7,865.5L924.8,864.8L929.1,861.4L934.4,861.6M937.6,866.4L937.4,863.0M934.4,861.6L937.4,863.0M974.3,824.5L971.1,824.9L967.9,824.9L964.8,823.7M973.7,816.0L970.1,817.4L967.4,820.1L964.3,822.2M964.8,823.7L964.3,822.2M641.3,657.0L642.8,658.5L644.2,660.0L645.7,661.4M641.3,657.0L643.0,654.7L643.9,652.0L644.9,649.3M645.7,661.4L648.6,658.7L651.1,655.5L654.3,653.1M653.5,649.4L654.3,653.1M620.8,656.6L627.6,656.8L634.4,659.3L641.3,657.0M964.3,797.3L961.3,798.6M964.3,797.3L967.1,800.1L970.1,802.6L973.0,805.2M961.3,798.6L959.3,801.8L960.5,805.9L958.4,809.1M973.2,808.5L968.3,810.3L963.3,807.9L958.4,809.1M965.8,794.2L964.3,797.3M958.7,794.8L959.2,796.3L960.9,797.1L961.3,798.6M898.2,880.6L898.0,889.2L895.2,896.7L889.7,903.3M909.0,910.6L907.5,910.2L906.0,910.3L904.6,909.6M889.7,903.3L894.6,905.6L899.4,908.1L904.6,909.6M904.6,909.6L903.8,912.4L900.9,913.6L900.0,916.2M1019.9,877.3L1013.8,876.2L1008.5,872.8L1002.7,870.9M1004.5,887.9L1002.9,887.8L1001.3,887.5L999.8,887.0M1002.7,870.9L1000.5,874.7L999.1,879.1L995.3,881.9M995.3,881.9L996.0,884.6M996.0,884.6L997.3,885.3L998.7,886.0L999.8,887.0M1001.4,902.8L1000.5,901.8L999.6,900.7L999.1,899.4M999.8,887.0L1000.0,891.2L998.7,895.3L999.1,899.4M984.5,910.2L984.1,906.4M999.1,899.4L993.3,900.0L989.6,905.2L984.1,906.4M1024.6,869.6L1024.4,867.9L1023.6,866.5L1022.9,865.0M1003.0,864.9L1003.5,866.9L1003.5,868.9L1002.7,870.9M1003.0,864.9L1004.6,863.9L1005.2,862.1L1006.6,861.0M1006.6,861.0L1009.8,858.4L1014.2,858.2L1017.7,856.2M1022.9,865.0L1021.6,861.8L1020.3,858.6L1017.7,856.2M1006.6,861.0L1003.5,857.6L999.9,854.5L997.2,850.6M997.2,850.6L999.1,846.4L1001.2,842.2L1004.4,838.8M1017.7,856.2L1019.2,850.5L1021.4,844.9L1020.5,838.8M966.0,886.5L968.7,890.9L968.9,896.0L969.7,900.9M966.0,886.5L964.0,886.9L962.0,887.4L960.0,886.9M959.7,899.4L961.6,901.4L963.0,903.7L965.6,904.8M955.7,888.5L957.1,887.8L958.7,887.7L960.0,886.9M965.6,904.8L967.4,903.9L968.1,902.0L969.7,900.9M963.9,912.3L965.2,910.0L965.5,907.4L965.6,904.8M984.1,906.4L983.4,904.5M983.4,904.5L979.0,902.8L974.0,903.1L969.7,900.9M864.1,883.5L862.6,879.9L861.3,876.3L861.4,872.3M861.4,872.3L861.3,872.3M861.3,872.3L857.3,873.5L854.0,875.8L851.1,878.7M851.1,878.7L851.3,880.4L850.4,881.9L850.2,883.5M870.3,886.7L875.8,880.8L884.1,878.7L889.7,872.9M889.7,872.9L893.1,873.5M889.7,903.3L888.3,904.8L886.5,905.9L885.6,907.9M851.1,878.7L850.3,874.7L847.3,871.6L846.9,867.5M833.3,878.1L835.5,874.1L838.6,870.8L841.0,866.9M841.0,866.9L842.9,867.7L845.0,867.1L846.9,867.5M861.3,872.3L858.3,869.5L856.3,866.0L854.5,862.4M854.5,862.4L852.6,864.2L850.4,865.8L847.9,866.7M847.9,866.7L846.9,867.5M645.7,661.4L645.8,662.3M654.3,653.1L658.8,656.8L663.0,660.8L666.2,665.8M666.2,665.8L661.5,666.8L656.5,666.6L652.2,669.0M645.8,662.3L647.2,665.2L650.6,666.2L652.2,669.0M645.8,662.3L639.9,666.2L634.0,670.1L628.8,675.0M574.8,690.4L571.0,690.1L567.8,687.8L564.2,686.6M556.3,695.6L556.0,693.2L556.5,690.8L556.9,688.5M556.3,695.6L558.5,698.5L559.3,702.3L561.9,705.0M564.2,686.6L562.8,686.9L561.3,686.5L559.9,686.6M556.9,688.5L559.9,686.6M579.7,677.2L574.4,680.0L569.8,684.1L564.2,686.6M579.7,677.2L581.1,680.5L584.4,682.2L586.2,685.1M575.0,661.7L577.2,666.7L577.4,672.3L579.7,677.2M652.2,669.0L650.0,672.3L647.3,675.1L645.6,678.7M550.8,697.9L552.4,696.7L554.3,695.9L556.3,695.6M542.0,677.2L546.3,681.8L552.3,684.3L556.9,688.5M561.5,682.2L560.6,683.5L560.7,685.2L559.9,686.6M958.5,666.5L960.1,666.0L961.9,666.7L963.5,666.1M958.5,666.5L955.9,666.0L953.3,665.8L951.0,664.4M951.0,664.4L953.6,660.2L958.3,658.1L960.9,653.9M962.7,654.0L960.9,653.9M964.5,680.5L963.0,681.1L961.4,681.1L959.9,681.4M959.9,681.4L960.6,676.3L959.3,671.4L958.5,666.5M946.0,650.1L945.2,654.3L944.6,658.5L946.0,662.7M957.3,650.0L958.7,651.2L959.4,653.0L960.9,653.9M946.0,662.7L947.0,664.2M947.0,664.2L948.3,664.3L949.7,664.1L951.0,664.4M739.1,650.3L740.0,659.6L737.2,668.2L734.6,676.9M734.6,676.9L733.6,677.4M733.6,677.4L729.0,673.8L727.6,667.7L723.2,663.9M721.9,650.1L722.2,654.7L724.3,659.2L723.2,663.9M733.6,677.4L730.9,679.2L729.4,681.9L727.5,684.4M723.2,663.9L721.4,666.7L720.1,669.9L717.5,672.1M863.6,650.9L863.5,652.7L862.9,654.4L863.4,656.2M851.1,651.0L852.9,653.5L855.0,655.6L856.8,658.1M856.8,658.1L859.1,658.2M859.1,658.2L860.6,657.7L862.0,657.0L863.4,656.2M935.8,661.7L939.2,662.3L942.7,661.6L946.0,662.7M935.8,661.7L930.1,660.8L924.6,659.1L920.2,655.0M919.3,650.4L919.2,652.0L920.4,653.4L920.2,655.0M955.5,795.5L955.2,797.1L954.2,798.5L953.7,800.1M955.5,795.5L953.1,795.2L950.7,794.1L948.1,794.5M948.1,794.5L950.3,796.0L952.4,797.7L953.7,800.1M957.2,793.5L955.5,795.5M956.8,809.8L958.4,809.1M956.8,809.8L955.0,806.9L954.7,803.5L953.7,800.4M953.7,800.4L953.7,800.1M956.7,785.6L954.2,785.3M954.2,785.3L952.2,788.5L949.4,791.0L946.8,793.8M946.8,793.8L948.1,794.5M946.8,793.8L944.8,794.2L943.1,795.5L941.2,795.9M953.7,800.4L949.6,799.2L945.2,800.5L941.2,798.4M941.2,798.4L941.2,795.9M954.1,745.5L951.6,744.2L949.4,742.3L946.5,741.8M954.1,745.5L954.6,751.0L957.9,755.4L960.1,760.2M960.1,760.2L955.7,760.7L953.0,764.6L948.8,765.7M948.8,765.7L945.8,758.5L944.7,750.9L943.0,743.3M946.5,741.8L943.0,743.3M962.6,775.5L957.5,773.6L952.9,770.5L947.4,769.8M966.9,762.7L964.6,761.9L962.1,761.7L960.1,760.2M948.8,765.7L947.0,768.2M947.4,769.8L947.0,768.2M949.3,872.7L952.3,871.6M937.4,863.0L939.7,860.8M946.1,860.6L948.2,862.5L951.1,863.2L953.1,865.2M952.3,871.6L953.1,869.5L952.4,867.3L953.1,865.2M960.3,858.9L959.3,861.3L958.1,863.7L956.2,865.6M960.3,858.9L957.0,858.0L954.3,855.9L951.1,854.8M951.1,854.8L949.1,854.9L947.2,855.0L945.3,854.2M944.7,855.0L945.3,854.2M953.1,865.2L956.2,865.6M975.9,889.4L978.1,894.5L980.1,899.7L983.4,904.2M975.9,889.4L981.5,886.9L987.6,887.4L993.4,886.9M993.4,886.9L991.9,893.7L988.8,899.6L983.4,904.2M969.5,884.8L966.0,886.5M969.5,884.8L971.8,886.2L974.0,887.5L975.9,889.4M983.4,904.5L983.4,904.2M996.0,884.6L993.4,886.9M1003.0,864.9L999.6,862.7L995.2,863.9L991.9,861.5M995.3,881.9L993.3,880.4M993.3,880.4L993.5,874.0L993.4,867.7L991.9,861.5M969.5,884.8L970.9,882.0L972.6,879.3L974.2,876.5M974.2,876.5L975.7,875.1L977.3,874.0L979.2,873.2M993.3,880.4L987.8,879.5L984.6,874.3L979.2,873.2M965.5,869.2L964.7,868.0L964.5,866.6L964.6,865.1M965.5,869.2L963.0,869.9L960.8,871.4L958.4,872.4M964.6,865.1L962.0,866.0L959.7,867.3L957.0,867.8M958.4,872.4L957.0,871.2M957.0,871.2L957.0,867.8M974.2,876.5L970.7,874.8L968.9,871.0L965.5,869.2M960.0,886.9L958.2,882.2L958.2,877.3L958.4,872.4M952.3,871.6L953.9,871.7L955.4,871.1L957.0,871.2M956.2,865.6L957.0,867.8M1033.9,858.6L1035.2,852.3L1031.1,846.6L1031.8,840.3M1033.9,858.6L1036.0,858.7L1038.1,858.8L1040.1,858.8M1040.4,858.6L1038.0,853.0L1036.7,846.9L1033.2,841.8M1040.4,858.6L1040.1,858.8M1033.2,841.8L1031.8,840.3M1022.9,865.0L1025.9,861.7L1030.3,860.9L1033.9,858.6M1030.6,838.8L1031.8,840.3M1034.5,871.4L1037.2,867.6L1036.9,862.4L1040.1,858.8M1046.5,858.8L1044.4,858.7L1042.4,858.7L1040.4,858.6M1048.5,851.0L1043.2,848.3L1038.4,844.7L1033.2,841.8M964.8,823.7L964.9,824.7M964.9,824.7L968.0,827.7L971.2,830.5L974.9,832.7M944.9,846.5L950.5,844.6L954.6,840.6L958.9,836.9M944.9,846.5L944.1,849.1L944.8,851.6L945.3,854.2M951.1,854.8L956.2,849.5L961.6,844.7L968.4,841.8M968.4,841.8L964.8,841.2L961.8,839.1L958.9,836.9M964.3,822.2L961.7,821.0M964.9,824.7L963.9,829.2L960.3,832.2L958.7,836.3M958.7,836.3L957.6,834.3L956.2,832.6L954.7,830.9M961.7,821.0L959.7,824.5L957.1,827.6L954.7,830.9M956.8,809.8L955.0,811.4M961.7,821.0L958.9,818.2L958.2,813.9L955.0,811.4M853.1,854.3L854.6,852.7L856.6,852.1L858.5,851.4M853.1,854.3L851.4,852.5L849.2,851.3L847.8,849.2M858.5,851.4L859.6,847.8L858.7,844.1L858.8,840.5M847.8,849.2L849.5,845.8L850.9,842.2L853.9,839.7M853.9,839.7L857.9,839.9M857.9,839.9L858.8,840.5M854.5,862.4L855.0,861.3M855.0,861.3L854.0,859.1L853.9,856.6L853.1,854.3M843.2,849.4L845.7,855.0L848.2,860.5L847.9,866.7M843.2,849.4L844.8,849.4L846.3,849.1L847.8,849.2M861.4,872.3L868.3,872.0L874.5,869.3L880.6,866.5M855.0,861.3L859.7,861.3L864.4,861.2L868.9,859.3M868.9,859.3L872.3,862.5L877.0,863.6L880.6,866.5M889.7,872.9L887.0,870.6L883.8,869.2L881.3,866.6M880.6,866.5L881.3,866.6M959.9,681.4L958.9,682.5L957.8,683.3L956.5,683.9M947.0,664.2L947.0,667.9L945.7,671.2L944.1,674.5M944.1,674.5L945.3,675.3L945.9,676.8L947.0,677.7M956.5,683.9L953.0,682.4L949.5,680.8L947.0,677.7M935.8,661.7L932.9,666.3L930.4,671.2L926.2,675.0M944.1,674.5L941.2,676.1M927.6,679.9L926.7,679.1M926.2,675.0L926.2,676.4L926.8,677.7L926.7,679.1M920.2,655.0L919.7,656.6M926.2,675.0L924.3,668.8L920.5,663.3L919.7,656.6M950.0,731.7L950.5,730.8M950.0,731.7L948.9,735.1L946.8,738.1L946.5,741.8M950.5,730.8L955.0,728.0L960.1,726.5L964.9,724.2M954.1,745.5L958.9,744.1L963.5,741.8L968.7,742.2M964.9,724.2L967.5,724.4M692.0,658.1L690.8,655.4L692.2,652.5L691.2,649.8M667.9,667.1L667.1,666.0M672.8,649.6L671.5,655.3L668.2,660.3L667.1,666.0M721.2,650.1L716.5,655.3L710.0,658.6L706.1,664.7M666.2,665.8L667.1,666.0M872.6,665.7L877.7,663.6L883.1,663.8L888.4,662.9M872.6,665.7L871.8,664.1L871.3,662.3L870.1,660.9M870.1,660.9L870.4,659.5M870.4,659.5L872.7,655.5L876.7,653.3L880.2,650.7M889.6,650.6L889.8,652.1L889.9,653.6L890.2,655.1M888.4,662.9L888.3,660.1L889.7,657.7L890.2,655.1M864.0,665.9L862.7,663.1L861.2,660.5L859.1,658.2M864.0,665.9L865.7,663.9L868.0,662.5L870.1,660.9M863.4,656.2L865.9,657.0L868.2,658.2L870.4,659.5M919.7,656.6L916.4,661.0L911.1,663.5L908.7,668.7M908.7,668.7L900.9,666.3L897.8,657.6L890.2,655.1M954.2,785.3L951.3,784.3L949.0,782.4L947.1,779.9M936.9,790.8L938.7,792.2L940.0,794.0L941.2,795.9M936.9,790.8L936.9,788.0M936.9,788.0L941.0,786.2L944.4,783.4L947.1,779.9M947.4,769.8L946.4,772.1L947.1,774.6L946.6,776.9M947.1,779.9L946.6,776.9M997.2,850.6L994.2,853.4L989.9,853.3L986.5,855.2M986.5,855.2L985.4,848.9L979.6,845.0L978.5,838.8M991.9,861.5L990.3,859.8L987.7,859.7L986.2,857.7M986.5,855.2L986.2,857.7M968.4,841.8L969.1,842.0M958.7,836.3L958.9,836.9M969.1,842.0L972.3,841.4L975.2,839.9L978.3,838.8M953.4,829.9L952.0,828.4M953.4,829.9L948.4,831.6L944.2,834.5L940.8,838.5M952.0,828.4L949.7,829.4L947.2,828.9L944.8,829.1M944.8,829.1L944.0,832.4L942.1,835.2L940.5,838.2M940.5,838.2L940.8,838.5M955.0,811.4L953.4,812.7L951.4,812.9L949.4,813.4M949.4,813.4L950.6,818.3L953.0,823.1L952.0,828.4M954.7,830.9L953.4,829.9M944.9,846.5L943.8,845.2M943.8,845.2L942.7,843.0L942.4,840.5L940.8,838.5M933.2,833.5L932.9,829.3L936.4,826.0L936.1,821.9M933.2,833.5L935.7,835.0L938.4,836.1L940.5,838.2M936.1,821.9L938.2,825.3L942.0,826.6L944.8,829.1M858.5,851.4L859.6,851.3M868.9,859.3L868.3,857.9L867.8,856.6L867.4,855.2M859.6,851.3L861.9,853.3L865.1,853.2L867.4,855.2M853.9,839.7L851.5,837.1L849.9,834.1L848.5,830.9M857.9,839.9L859.0,834.6L864.2,831.5L865.7,826.3M864.1,824.4L865.7,826.3M864.1,824.4L858.8,825.8L853.4,826.8L848.2,828.5M848.5,830.9L848.2,828.5M843.2,849.4L840.1,849.3M841.0,866.9L840.3,864.9L838.7,863.6L837.6,861.9M840.1,849.3L840.0,853.7L838.4,857.7L837.6,861.9M941.2,798.4L940.9,801.4M936.9,790.8L932.1,792.9L927.7,795.7L922.6,797.1M922.6,797.1L924.3,799.2L925.4,801.8L926.5,804.3M926.5,804.3L931.5,804.2L935.9,801.2L940.9,801.4M949.4,813.4L948.1,812.7L946.6,813.2L945.2,812.7M936.1,821.9L935.8,818.4M935.8,818.4L938.6,816.0L941.5,813.8L945.2,812.7M945.2,812.7L943.5,809.1L942.0,805.3L940.9,801.4M902.4,835.5L906.4,835.0L910.4,834.6L914.0,832.6M914.0,832.6L915.5,837.6L914.0,843.0L915.7,848.1M909.7,852.7L911.4,851.4L913.3,850.5L915.2,849.6M915.2,849.6L915.7,848.1M881.3,866.6L879.7,862.5L881.6,857.9L879.9,853.7M879.9,853.7L881.7,849.0L885.0,844.9L886.5,840.1M902.8,818.9L905.3,818.8L907.2,820.6L909.6,821.1M914.0,832.6L914.6,831.6M914.6,831.6L912.2,828.4L911.2,824.6L909.6,821.1M913.2,807.5L915.0,809.3M913.2,807.5L909.7,807.3L906.4,808.7L902.9,808.1M915.0,809.3L913.2,813.2L910.6,816.7L909.8,821.0M909.6,821.1L909.8,821.0M732.8,695.4L736.2,694.8M747.8,713.4L747.1,708.0L748.8,702.9L749.5,697.7M736.2,694.8L740.9,694.8L745.3,695.6L749.5,697.7M793.3,738.8L793.5,740.5L793.8,742.2L793.9,744.0M793.3,738.8L788.5,737.1L783.8,735.1L778.5,735.1M793.9,744.0L785.7,743.5L777.8,746.3L769.6,746.1M767.6,742.7L771.2,740.2L775.2,738.1L778.5,735.1M947.9,724.2L945.6,721.0L942.3,718.8L939.1,716.8M947.9,724.2L949.6,719.7L950.0,714.9L952.9,710.9M939.1,716.8L941.9,714.4L942.6,710.6L945.1,707.9M945.1,707.9L946.4,707.7L947.9,708.0L949.2,707.4M949.2,707.4L950.7,708.3L951.3,710.1L952.9,710.9M950.0,731.7L945.3,730.3L940.9,728.6L937.3,725.1M950.5,730.8L949.7,728.6L949.2,726.2L947.9,724.2M938.4,717.0L938.2,719.7L937.0,722.3L937.3,725.1M938.4,717.0L939.1,716.8M924.1,705.8L927.1,709.1L928.8,713.4L932.3,716.2M934.1,699.5L938.6,701.3L941.9,704.5L945.1,707.9M932.3,716.2L934.4,715.9L936.3,717.1L938.4,717.0M956.6,689.0L953.0,689.4L949.3,689.2L945.6,689.8M956.6,689.0L957.6,690.7L957.5,692.7L958.4,694.3M958.4,694.3L957.6,695.3M957.6,695.3L955.4,696.0L954.6,698.5L952.5,699.4M952.5,699.4L948.9,697.6L946.6,694.0L942.7,692.6M942.7,692.6L943.9,691.9L944.9,691.0L945.6,689.8M956.5,683.9L956.9,685.6L956.5,687.3L956.6,689.0M947.0,677.7L947.8,681.9L946.3,685.8L945.6,689.8M937.0,693.0L938.9,693.0L940.8,692.4L942.7,692.6M949.2,707.4L950.1,704.7L951.1,702.0L952.5,699.4M953.9,711.3L955.8,709.1L958.1,707.6L960.8,706.8M953.9,711.3L954.9,712.1M954.9,712.1L958.9,712.2L962.4,709.3L966.5,709.9M960.8,706.8L962.7,707.1L964.5,706.8L966.2,706.0M952.9,710.9L953.9,711.3M957.6,695.3L957.3,699.5L959.0,703.2L960.8,706.8M964.9,724.2L960.1,721.4L957.1,717.1L954.9,712.1M958.4,694.3L960.9,694.5L963.3,694.8L965.5,695.8M789.4,650.8L789.5,652.6L788.1,654.0L788.1,655.7M788.1,655.7L782.3,656.2L777.2,658.7L772.4,661.7M772.4,661.7L770.5,658.2L770.8,654.0L768.6,650.6M739.9,650.3L742.4,654.1L746.7,656.0L749.5,659.4M767.7,650.6L762.4,655.2L756.3,658.1L749.5,659.4M862.3,710.7L860.7,712.8M862.3,710.7L859.6,708.8L857.7,706.0L854.7,704.5M851.2,711.2L854.5,710.9L857.5,712.3L860.6,713.0M851.2,711.2L851.3,709.0L852.5,707.0L852.2,704.7M860.6,713.0L860.7,712.8M852.2,704.7L854.7,704.5M868.0,721.5L864.8,719.2L863.5,715.4L860.7,712.8M868.0,721.5L866.4,718.1L866.2,714.4L864.7,711.1M864.7,711.1L862.4,710.6M862.4,710.6L862.3,710.7M789.9,757.3L791.8,755.3L793.2,753.0L794.1,750.4M793.9,744.0L794.2,744.7M794.1,750.4L794.6,748.5L793.9,746.6L794.2,744.7M836.7,754.1L836.0,751.7L835.5,749.3L835.8,746.8M836.7,754.1L835.0,755.3M835.8,746.8L834.0,747.2L832.1,747.6L830.1,747.2M830.1,747.2L831.2,750.2L834.2,752.0L835.0,755.3M843.1,751.0L841.2,752.5L838.7,752.7L836.7,754.1M843.1,751.0L842.6,749.4M835.8,746.8L839.0,745.8M842.6,749.4L841.6,748.0L840.6,746.6L839.0,745.8M851.0,703.9L849.0,703.2L846.8,702.7L845.1,701.1M851.0,703.9L851.1,703.9M851.1,703.9L852.4,699.9L851.3,695.5L852.3,691.4M845.8,691.5L848.0,691.9L850.2,690.7L852.3,691.4M845.8,691.5L846.5,694.5L845.0,697.3L845.0,700.3M845.0,700.3L845.1,701.1M821.5,701.3L823.7,701.7L825.9,701.5L828.1,701.5M821.5,701.3L820.4,704.2M828.1,701.5L826.3,703.8L824.5,706.0L822.9,708.4M820.4,704.2L821.6,705.4L822.5,706.7L822.9,708.4M813.5,692.3L816.1,691.1L818.9,690.5L821.5,689.5M813.5,692.3L816.7,694.8L819.5,697.7L821.5,701.3M832.7,696.0L828.9,694.0L825.1,691.9L821.5,689.5M832.7,696.0L832.7,696.4M832.7,696.4L832.7,698.0L831.6,699.4L831.8,701.1M831.8,701.1L828.1,701.5M813.5,692.3L810.7,692.0M810.7,692.0L809.7,695.0L811.6,698.0L810.5,700.9M817.0,706.7L814.8,704.8L812.3,703.2L810.5,700.9M817.0,706.7L818.1,705.7L819.0,704.6L820.4,704.2M947.0,768.2L943.4,768.4L940.0,767.7L936.9,765.7M934.6,776.9L938.6,775.8L942.6,777.3L946.6,776.9M934.6,776.9L934.2,773.2L937.0,770.1L936.7,766.4M936.7,766.4L936.9,765.7M943.0,743.3L941.6,743.5M933.1,761.9L934.1,763.4L935.9,764.2L936.9,765.7M933.1,761.9L934.2,759.5L935.4,757.1L935.4,754.4M941.6,743.5L940.5,747.7L937.3,750.7L935.4,754.4M926.7,679.1L921.9,679.3L917.2,679.8L912.5,679.2M908.7,668.7L908.9,671.3L909.0,674.0L908.0,676.5M908.0,676.5L909.4,677.6L911.2,678.0L912.5,679.2M917.1,695.4L915.6,694.3L914.6,692.6L912.8,691.9M912.5,679.2L913.0,683.4L913.3,687.6L912.8,691.9M829.8,796.4L832.3,796.7L834.7,795.7L837.1,795.2M829.8,796.4L828.3,800.1L828.1,804.3L826.1,807.9M837.6,808.0L834.5,808.6L831.5,810.0L828.4,810.6M837.6,808.0L838.4,804.9L838.7,801.7L839.6,798.6M839.6,798.6L838.4,797.7L838.2,796.1L837.1,795.2M826.1,807.9L828.4,810.6M810.7,807.6L812.8,808.9M821.2,791.2L823.8,793.3L826.3,795.6L829.8,796.4M812.8,808.9L817.2,807.9L821.6,807.5L826.1,807.9M838.5,809.2L840.9,809.6L843.0,810.9L845.1,812.2M838.5,809.2L837.6,808.0M847.7,802.1L847.3,805.6L846.7,809.1L845.1,812.2M847.7,802.1L844.8,801.4L842.1,800.2L839.6,798.6M859.5,770.4L864.6,772.5L870.0,771.8L875.3,772.8M859.5,770.4L860.7,773.6L864.2,775.3L865.1,778.7M865.1,778.7L866.7,779.1L867.7,780.6L869.3,780.8M875.3,772.8L874.1,776.1L872.1,778.7L869.3,780.8M824.9,777.7L828.3,778.2M824.9,777.7L824.3,777.7M828.3,778.2L831.0,781.7L834.2,784.7L836.4,788.5M837.1,795.2L837.8,793.6M836.4,788.5L837.3,790.1L837.2,791.9L837.8,793.6M828.3,778.2L832.2,777.5L835.7,775.3L839.7,775.0M839.7,775.0L840.3,776.9M836.4,788.5L837.8,784.7L838.9,780.7L840.3,776.9M864.1,824.4L864.1,821.6M848.2,828.5L847.7,828.0M847.7,828.0L851.3,823.8L851.1,817.6L855.1,813.6M855.1,813.6L857.7,812.4M864.1,821.6L861.4,818.9L860.0,815.3L857.7,812.4M870.4,783.0L869.3,780.8M870.4,783.0L873.5,781.8L876.7,783.5L879.8,782.6M879.8,782.6L881.2,782.4M882.7,774.5L881.0,772.9L878.5,772.9L876.5,771.7M875.3,772.8L876.5,771.7M876.5,771.7L876.5,771.7M980.5,864.5L980.9,863.5M980.5,864.5L975.3,862.7L969.7,864.0L964.5,862.3M980.9,863.5L977.5,858.6L971.1,857.6L967.2,853.3M967.2,853.3L966.5,855.7L965.0,857.5L962.9,859.0M962.9,859.0L964.5,862.3M979.2,873.2L979.6,870.3L979.1,867.3L980.5,864.5M986.2,857.7L983.8,859.0L982.5,861.4L980.9,863.5M964.6,865.1L964.5,862.3M969.1,842.0L968.3,845.7L967.5,849.5L967.2,853.3M960.3,858.9L962.9,859.0M934.4,861.6L932.9,860.1L932.0,858.1L930.1,857.0M943.8,845.2L940.2,844.7L936.7,845.4L933.1,845.2M933.1,845.2L932.7,849.3L932.1,853.3L930.1,857.0M915.2,849.6L918.5,850.2L921.8,851.4L924.9,852.8M930.1,857.0L928.0,856.1L927.0,853.7L924.9,852.8M926.3,838.5L927.9,840.3L928.6,842.6L929.8,844.6M926.3,838.5L927.5,835.2M927.5,835.2L929.1,834.1L931.0,834.2L932.7,833.7M932.7,833.7L932.4,837.5L934.0,841.3L932.9,845.1M932.9,845.1L929.8,844.6M915.7,848.1L920.4,846.1L922.0,840.8L926.3,838.5M924.9,852.8L926.1,849.8L928.6,847.6L929.8,844.6M921.3,830.5L919.1,831.2L916.7,830.6L914.6,831.6M921.3,830.5L923.6,831.7L925.6,833.4L927.5,835.2M933.2,833.5L932.7,833.7M933.1,845.2L932.9,845.1M858.8,840.5L860.4,841.1M859.6,851.3L860.8,850.3L861.9,849.3L862.6,847.9M860.4,841.1L860.5,843.6L862.2,845.5L862.6,847.9M812.8,808.9L814.1,812.3L815.8,815.7L817.0,819.2M817.0,819.2L820.5,819.0L823.7,817.2L827.2,817.1M828.4,810.6L828.4,810.8M828.4,810.8L827.5,812.8L827.3,815.0L827.2,817.1M827.8,820.0L829.3,821.8L830.1,824.0L830.8,826.1M827.8,820.0L828.0,818.8M828.0,818.8L830.5,819.0L832.7,820.6L835.2,820.4M830.8,826.1L832.2,824.2L833.9,822.4L835.2,820.4M827.8,820.0L825.1,822.0L824.2,825.2L822.1,827.6M830.8,826.1L829.8,828.6L830.8,831.2L830.1,833.7M830.1,833.7L829.3,834.7M829.3,834.7L826.1,833.2L823.8,830.6L822.1,827.6M817.0,819.2L816.5,821.2L816.8,823.3L816.4,825.3M828.0,818.8L827.2,817.1M822.1,827.6L820.4,826.4L818.3,826.0L816.4,825.3M826.4,842.4L828.8,841.0M826.4,842.4L823.8,847.1L823.2,852.5L820.8,857.3M828.8,841.0L831.2,842.4L833.4,843.9L836.0,844.8M821.3,861.7L827.0,856.9L833.5,853.1L839.6,848.9M836.0,844.8L836.9,846.5L838.0,847.9L839.6,848.9M848.5,830.9L844.9,836.0L841.6,841.5L836.0,844.8M847.7,828.0L846.6,827.0L845.2,826.6L844.0,825.9M830.1,833.7L835.6,832.7L839.9,829.4L844.0,825.9M829.3,834.7L829.3,836.8L828.5,838.9L828.8,841.0M837.6,861.9L832.2,861.8L826.7,861.3L821.2,862.2M840.1,849.3L839.6,848.9M806.3,809.9L805.6,816.1L807.9,821.8L809.2,827.7M791.8,820.6L792.7,823.1L795.0,824.5L796.3,826.6M809.2,827.7L805.8,828.4M796.3,826.6L799.6,826.9L802.6,828.1L805.8,828.4M789.3,848.8L790.8,847.5L792.7,846.7L794.1,845.3M796.3,826.6L795.5,832.8L793.8,839.0L794.1,845.3M806.3,855.1L803.1,850.9L798.6,848.4L794.6,845.3M794.1,845.3L794.6,845.3M922.4,826.4L920.7,823.3L918.1,821.1L915.2,819.2M922.4,826.4L925.7,823.7L926.1,818.9L929.6,816.4M926.5,813.4L927.9,814.1L928.5,815.5L929.6,816.4M926.5,813.4L925.0,813.8L923.5,813.3L922.0,813.9M922.0,813.9L919.9,815.8L917.1,817.0L915.2,819.2M921.3,830.5L921.4,829.1L922.2,827.8L922.4,826.4M909.8,821.0L911.8,820.9L913.5,820.3L915.2,819.2M935.8,818.4L933.7,818.0L931.7,817.1L929.6,816.4M926.5,804.3L926.4,807.4L926.8,810.4L926.5,813.4M913.2,807.5L915.6,803.6L919.3,800.6L920.4,796.0M920.4,796.0L922.6,797.1M915.0,809.3L916.9,811.5L919.9,812.0L922.0,813.9M823.8,670.5L817.2,667.6L810.7,664.3L803.2,664.4M823.8,670.5L818.9,674.4L812.6,675.9L808.3,680.5M808.3,680.5L807.7,674.8L806.2,669.4L803.0,664.6M803.2,664.4L803.0,664.6M828.9,651.2L829.9,654.0L828.4,656.9L829.4,659.7M809.2,651.0L805.6,654.8L806.0,660.3L803.2,664.4M824.5,670.3L826.0,668.2L826.5,665.5L828.4,663.6M824.5,670.3L823.8,670.5M829.4,659.7L829.0,661.0L828.6,662.3L828.4,663.6M824.5,670.3L824.8,673.5L825.5,676.6L827.1,679.4M827.1,679.4L825.8,683.0L824.3,686.6L821.5,689.5M806.3,685.2L807.3,683.8L807.1,681.8L808.3,680.5M806.3,685.2L808.0,687.0L809.2,689.2L810.0,691.5M810.7,692.0L810.0,691.5M806.3,685.2L804.2,684.5L802.1,684.8L800.0,684.5M800.0,684.5L798.4,682.1M803.0,664.6L800.7,664.5L798.6,665.1L796.5,665.7M798.4,682.1L799.1,676.5L798.3,671.0L796.5,665.7M788.1,655.7L789.0,659.4L792.2,661.9L793.4,665.3M793.4,665.3L796.5,665.7M800.0,684.5L796.4,686.8L792.3,687.9L788.7,690.2M786.9,692.4L788.7,690.2M786.9,692.4L786.9,695.7M810.0,691.5L806.8,693.8L803.3,695.8L800.7,698.9M786.9,695.7L791.3,697.8L796.3,697.2L800.7,698.9M810.5,700.9L809.0,704.6M809.0,704.6L805.9,705.6L802.7,704.3L799.6,704.9M800.7,698.9L800.1,700.9L800.3,703.0L799.6,704.9M809.0,704.6L809.6,706.8L809.6,708.9L808.8,711.0M799.6,704.9L798.5,706.5M798.5,706.5L802.2,707.4L805.6,708.9L808.8,711.0M794.2,728.5L789.6,731.2L784.7,733.4L779.2,733.4M794.2,728.5L792.3,725.8L791.4,722.6L790.5,719.4M790.5,719.4L789.1,719.7L787.6,719.6L786.2,719.2M786.2,719.2L783.1,719.5M783.1,719.5L781.9,722.5M779.2,733.4L780.0,729.7L781.9,726.4L781.9,722.5M793.3,738.8L794.7,737.4L795.1,735.5L796.2,733.9M778.5,735.1L779.2,733.4M795.7,730.9L796.2,733.9M795.7,730.9L794.2,728.5M762.3,729.3L768.2,725.3L775.0,723.7L781.9,722.5M937.3,725.1L936.0,726.1L935.0,727.4L933.7,728.5M941.6,743.5L938.3,741.9M933.7,728.5L935.0,733.0L936.0,737.7L938.3,741.9M757.1,683.0L756.6,684.5M757.1,683.0L758.4,678.1L759.8,673.3L759.3,668.2M749.3,683.8L751.4,684.1L753.2,685.2L754.9,686.3M749.3,683.8L746.3,682.4L744.8,679.5L742.5,677.4M754.9,686.3L756.6,684.5M742.5,677.4L745.9,673.2L747.7,667.9L751.5,663.9M751.5,663.9L754.5,664.5L756.7,666.7L759.3,668.2M773.3,683.5L767.8,685.2L762.2,685.4L756.6,684.5M773.3,683.5L773.5,679.6L775.6,675.9L774.8,671.8M774.8,671.8L769.3,676.1L762.5,678.4L757.1,683.0M775.0,671.3L773.7,669.5L772.5,667.6L771.5,665.7M775.0,671.3L774.8,671.8M771.5,665.7L767.6,667.6L763.5,668.3L759.3,668.2M755.6,690.7L755.7,689.2L755.1,687.8L754.9,686.3M755.6,690.7L754.0,693.3L750.7,694.6L749.5,697.7M736.2,694.8L741.6,692.3L744.3,686.7L749.3,683.8M734.6,676.9L737.3,677.0L739.9,677.4L742.5,677.4M764.2,697.6L766.6,693.9L770.2,691.4L773.4,688.6M764.2,697.6L761.0,695.8L759.0,692.3L755.6,690.7M774.8,686.5L773.3,683.5M774.8,686.5L773.4,688.6M749.5,659.4L750.6,660.8L750.3,662.7L751.5,663.9M772.4,661.7L772.3,663.1L771.9,664.4L771.5,665.7M851.0,703.9L849.4,706.2L846.3,706.6L844.7,708.9M845.1,701.1L843.6,702.0L843.0,703.8L841.4,704.5M844.7,708.9L843.6,707.4L842.4,706.1L841.4,704.5M832.7,696.0L834.4,694.3L835.5,692.2L837.3,690.5M827.1,679.4L828.1,680.6L829.8,680.7L830.9,681.7M830.9,681.7L832.4,685.1L835.6,687.2L837.3,690.5M845.8,691.5L844.6,690.6L843.2,690.1L841.9,689.3M845.0,700.3L840.9,698.9L836.8,697.6L832.7,696.4M837.3,690.5L838.8,690.3L840.2,689.3L841.9,689.3M845.7,651.0L849.3,656.2L847.3,663.1L851.0,668.2M856.8,658.1L856.1,661.5L854.6,664.7L853.0,667.8M853.0,667.8L851.0,668.2M829.4,659.7L836.7,661.6L842.4,666.7L849.4,669.1M851.0,668.2L849.4,669.1M851.2,711.2L848.9,714.0M860.6,713.0L859.1,714.6L859.1,716.8L858.2,718.6M858.2,718.6L854.9,717.4L851.9,715.8L848.9,714.0M868.0,721.5L868.3,722.2M859.3,723.8L862.1,722.2L865.2,721.8L868.3,722.2M859.3,723.8L858.5,722.5L858.4,721.1L858.2,719.7M858.2,718.6L858.2,719.7M856.5,749.8L858.8,749.6L860.2,747.5L862.5,747.1M856.5,749.8L855.8,749.9M855.8,749.9L855.6,747.5L854.8,745.3L855.0,742.9M855.0,742.9L857.2,742.2L859.4,743.5L861.6,743.0M862.5,747.1L861.8,745.8L861.5,744.4L861.6,743.0M856.4,755.8L855.9,754.4L854.6,753.5L854.0,752.1M856.4,755.8L855.4,759.1L852.2,761.2L851.5,764.8M854.0,752.1L852.6,752.6L851.0,752.1L849.6,752.7M849.6,752.7L850.8,756.6L850.7,760.8L851.5,764.8M808.2,735.6L804.1,735.6L800.2,735.0L796.2,733.9M808.2,735.6L808.4,737.9L809.3,739.9L810.8,741.6M810.4,743.3L805.1,745.0L799.5,743.4L794.2,744.7M810.4,743.3L810.5,743.1M810.8,741.6L810.5,743.1M833.1,704.1L831.8,701.1M833.1,704.1L830.9,706.7M822.9,708.4L823.1,709.3M823.1,709.3L825.5,707.8L828.1,707.2L830.9,706.7M933.1,761.9L928.7,764.0L923.8,762.9L919.3,764.1M935.4,754.4L930.4,752.1L925.2,750.5L919.8,750.0M919.8,750.0L918.6,750.8L918.0,752.0L917.0,753.0M919.3,764.1L917.6,760.6L916.4,756.9L917.0,753.0M871.6,711.2L872.2,710.0L873.3,709.0L873.6,707.6M871.6,711.2L869.3,711.2L867.0,710.9L864.7,711.1M862.4,710.6L863.7,708.4L864.2,706.1L864.2,703.5M870.3,701.3L868.9,701.6M870.3,701.3L871.5,702.4L873.0,703.0L874.4,703.8M864.2,703.5L865.6,702.6L867.4,702.5L868.9,701.6M873.6,707.6L874.4,703.8M905.2,676.8L901.8,678.8L897.9,679.8L894.7,682.1M905.2,676.8L906.8,677.0M906.8,677.0L905.2,682.1L900.3,685.4L899.3,690.8M894.7,682.1L895.5,685.3L894.2,688.5L895.0,691.7M895.0,691.7L896.5,691.8L897.8,690.7L899.3,690.8M887.4,671.3L886.8,672.1M887.4,671.3L892.9,674.7L899.1,675.6L905.2,676.8M886.8,672.1L889.2,675.6L892.6,678.3L894.7,682.1M888.4,662.9L888.4,665.7L888.3,668.5L887.4,671.3M908.0,676.5L906.8,677.0M912.8,691.9L910.2,692.7L907.4,693.1L904.8,694.1M904.8,694.1L903.2,692.7L901.3,691.6L899.3,690.8M855.1,813.6L851.9,813.9L848.7,813.8L845.6,813.4M847.7,802.1L849.5,802.3L851.3,802.3L853.0,801.5M853.0,801.5L855.1,802.9L856.6,805.0L858.2,806.9M845.1,812.2L845.6,813.4M857.7,812.4L857.8,810.9L858.8,809.6L858.6,808.1M858.2,806.9L858.6,808.1M883.1,762.9L882.3,761.5L883.0,759.8L882.3,758.3M883.1,762.9L881.1,763.8L879.8,765.7L877.9,766.8M877.9,766.8L877.1,764.3L875.5,762.2L874.6,759.7M882.3,758.3L879.4,756.5M874.6,759.7L876.2,758.8L877.7,757.5L879.3,756.5M879.4,756.5L879.3,756.5M885.4,765.5L883.1,762.9M876.5,771.7L877.5,770.2L877.4,768.4L877.9,766.8M886.1,757.4L888.1,755.0L888.9,752.0L890.1,749.1M886.1,757.4L882.3,758.3M879.8,753.8L883.0,751.6L887.2,751.1L889.9,748.0M879.8,753.8L879.4,756.5M856.5,749.8L858.4,750.3L859.7,752.0L861.6,752.4M856.4,755.8L859.6,757.4M855.8,749.9L854.0,752.1M859.6,757.4L860.9,756.0L861.4,754.2L861.6,752.4M859.3,770.1L861.4,767.8L863.3,765.4L865.0,762.8M859.3,770.1L857.4,769.8L855.7,770.6L853.9,770.7M853.9,770.7L850.9,769.1M851.5,764.8L851.0,766.2L850.8,767.6L850.9,769.1M859.6,757.4L860.9,759.7L863.3,761.0L865.0,762.8M859.3,770.1L859.5,770.4M876.5,771.7L873.4,768.2L868.8,766.4L866.3,762.2M865.0,762.8L866.3,762.2M867.6,850.3L866.5,848.9M867.6,850.3L869.2,848.2L871.4,846.7L873.9,845.9M866.5,848.9L866.9,846.3L866.2,843.7L866.5,841.0M873.9,845.9L874.4,843.2L872.7,840.8L873.2,838.2M873.2,838.2L871.2,839.7L868.5,839.5L866.5,841.0M867.4,855.2L867.4,853.5L867.2,851.9L867.6,850.3M862.6,847.9L866.5,848.9M879.9,853.7L878.4,850.7L875.4,848.9L873.9,845.9M860.4,841.1L862.4,841.7L864.5,840.7L866.5,841.0M876.8,832.5L878.7,832.5L880.3,831.6L882.1,831.2M876.8,832.5L875.0,834.0L874.7,836.4L873.2,838.2M865.7,826.3L868.7,829.5L873.4,829.9L876.8,832.5M838.0,810.9L839.6,814.1L840.6,817.6L842.4,820.7M838.0,810.9L837.3,812.5L836.4,814.1L836.0,815.8M836.0,815.8L836.4,817.3L837.4,818.4L837.8,819.9M837.8,819.9L839.5,820.0L840.6,821.3L842.1,821.6M842.4,820.7L842.1,821.6M838.5,809.2L838.0,810.9M845.6,813.4L844.3,815.8L843.3,818.2L842.4,820.7M828.4,810.8L830.9,812.5L832.9,814.9L836.0,815.8M835.2,820.4L837.8,819.9M844.0,825.9L843.2,824.6L843.1,822.9L842.1,821.6M811.8,853.0L810.7,851.1L810.9,848.8L810.0,846.8M826.4,842.4L822.6,841.7M822.6,841.7L817.8,842.1L814.6,846.2L810.0,846.8M794.6,845.3L798.3,845.5L801.8,843.5L805.6,843.6M810.0,846.8L808.2,846.2L807.0,844.7L805.6,843.6M805.8,828.4L805.4,833.0L806.9,837.4L806.4,842.0M805.6,843.6L806.4,842.0M789.4,669.4L789.6,672.5L792.6,674.4L792.7,677.4M789.4,669.4L786.8,670.8L784.1,671.7L781.3,672.3M792.7,677.4L790.6,678.6L788.5,679.6L786.2,680.2M781.3,672.3L782.9,673.8L783.7,675.8L784.3,677.9M784.3,677.9L786.2,680.2M798.4,682.1L796.2,680.9L794.8,678.8L792.7,677.4M793.4,665.3L792.2,666.8L790.5,667.9L789.4,669.4M775.0,671.3L777.1,671.5L779.2,671.7L781.3,672.3M788.7,690.2L787.1,687.1L786.4,683.7L786.2,680.2M774.8,686.5L778.3,687.9M778.3,687.9L781.3,685.1L782.2,681.1L784.3,677.9M786.9,692.4L783.8,691.3L780.9,690.0L778.3,687.9M787.1,699.8L786.7,696.2M787.1,699.8L786.7,700.3M786.7,700.3L781.7,703.7L778.5,708.5L775.3,713.5M786.7,696.2L782.9,696.7L779.2,697.4L775.7,699.3M775.7,699.3L773.2,701.7L769.6,702.5L767.0,704.9M775.3,713.5L772.2,713.7L769.7,711.8L766.7,711.4M767.0,704.9L767.2,707.1L766.6,709.2L766.7,711.4M786.9,695.7L786.7,696.2M798.5,706.5L797.6,707.5L796.4,708.2L795.2,708.8M795.2,708.8L792.9,705.5L790.7,701.9L787.1,699.8M794.4,716.2L794.4,713.7L794.4,711.2L795.2,708.8M794.4,716.2L793.4,717.6L791.7,718.2L790.5,719.4M786.2,719.2L788.1,713.0L784.4,706.5L786.7,700.3M783.1,719.5L780.3,717.7L777.4,716.1L775.3,713.5M773.4,688.6L773.0,692.4L775.9,695.5L775.7,699.3M764.2,697.6L765.9,699.8L765.6,702.7L767.0,704.9M757.7,718.6L761.6,717.3L764.2,714.4L766.7,711.4M932.3,716.2L931.5,719.1L929.4,721.2L927.8,723.6M927.8,723.6L927.6,724.2M933.7,728.5L931.8,727.5L930.1,726.0L927.9,725.5M927.6,724.2L927.9,725.5M838.3,741.2L838.3,742.8L839.3,744.2L839.0,745.8M838.3,741.2L840.5,741.2L842.7,741.7L845.0,741.3M842.6,749.4L843.7,746.9L845.0,744.6L845.7,742.0M845.7,742.0L845.4,741.4M845.0,741.3L845.4,741.4M848.7,748.5L850.6,746.9L851.9,744.9L852.4,742.4M848.7,748.5L848.8,746.4L848.0,744.5L847.5,742.5M847.5,742.5L849.2,742.3L850.8,742.1L852.4,742.4M843.1,751.0L845.5,752.3M845.7,742.0L847.5,742.5M845.5,752.3L847.7,752.1M847.7,752.1L848.7,748.5M851.1,703.9L852.2,704.7M844.7,708.9L844.7,710.6M848.9,714.0L848.5,714.2M844.7,710.6L846.3,711.5L847.1,713.1L848.5,714.2M841.4,704.5L839.6,704.3L837.9,704.3L836.2,704.9M844.7,710.6L841.9,711.6M841.9,711.6L841.4,711.5M841.4,711.5L840.3,708.8L837.6,707.4L836.2,704.9M833.1,704.1L833.6,704.4M833.6,704.4L836.2,704.9M843.0,683.4L840.9,682.3L838.7,681.2L837.0,679.5M843.0,683.4L844.3,681.3L846.2,679.5L846.8,677.0M846.7,677.0L846.8,677.0M846.7,677.0L844.3,675.7L841.5,675.5L838.9,674.6M838.9,674.6L838.7,676.4L837.2,677.7L837.0,679.5M830.9,681.7L833.2,681.5L835.1,680.6L837.0,679.5M841.9,689.3L842.0,687.3L842.5,685.3L843.0,683.4M828.4,663.6L831.7,667.5L834.3,672.0L838.9,674.6M849.4,669.1L849.0,671.9L847.8,674.4L846.7,677.0M864.0,665.9L863.8,667.5L863.3,668.9L862.2,670.0M853.0,667.8L853.4,668.0M862.2,670.0L859.2,669.9L856.5,668.0L853.4,668.0M859.3,723.8L859.2,724.0M858.2,719.7L856.4,719.5L854.6,719.8L852.8,719.8M850.1,725.0L853.1,724.5L856.1,723.8L859.2,724.0M850.1,725.0L849.0,722.6M849.0,722.6L850.4,721.9L851.5,720.7L852.8,719.8M848.5,714.2L847.4,716.5M852.8,719.8L850.6,719.3L849.3,717.4L847.4,716.5M864.2,703.5L863.7,702.9M868.9,701.6L867.9,700.0L865.8,699.8L864.7,698.2M863.7,702.9L864.6,701.4L863.9,699.7L864.7,698.2M846.8,677.0L849.9,678.4L851.9,681.6L855.4,682.4M853.4,668.0L853.2,672.1L856.4,675.3L856.6,679.3M855.4,682.4L856.6,679.3M852.3,691.4L853.9,691.1L855.4,690.4L856.8,689.8M856.8,689.8L857.0,685.9M855.4,682.4L857.0,685.9M862.2,670.0L863.2,671.6M856.6,679.3L858.6,676.6L861.5,674.6L863.2,671.6M877.7,701.0L879.3,699.3L880.1,697.0L881.9,695.5M877.7,701.0L875.8,698.5L874.3,695.6L872.0,693.3M881.9,695.5L880.8,693.4L879.4,691.4L878.0,689.5M872.0,693.3L874.2,692.4L875.7,690.2L878.0,689.5M910.4,724.4L913.7,725.2M917.4,722.6L916.4,723.9L915.2,724.7L913.7,725.2M917.4,722.6L918.6,720.2L919.3,717.5L920.4,715.1M920.9,707.9L920.1,710.2L919.7,712.6L920.4,715.1M927.8,723.6L924.5,721.5L922.6,718.1L920.4,715.1M927.6,724.2L924.2,723.9L920.8,723.0L917.4,722.6M904.8,694.1L904.2,697.8L905.5,701.3L906.3,704.9M893.7,692.3L893.1,693.4M893.7,692.3L895.0,691.7M902.0,708.6L899.5,707.2M899.5,707.2L896.7,702.9L895.8,697.8L893.1,693.4M841.2,762.3L838.3,763.6L835.0,764.1L832.0,765.2M841.2,762.3L843.5,763.5M843.5,763.5L844.9,765.0L845.1,767.1L846.1,768.8M846.1,768.8L844.6,769.9L842.9,770.7L841.5,772.0M841.5,772.0L839.4,770.5L837.2,769.1L835.0,767.8M835.0,767.8L832.0,765.2M835.0,755.3L834.3,756.9M834.3,756.9L836.3,759.1L839.4,759.9L841.2,762.3M845.5,752.3L844.2,755.9L843.8,759.7L843.5,763.5M847.7,752.1L849.6,752.7M850.9,769.1L849.3,768.8L847.7,769.0L846.1,768.8M824.9,777.7L827.3,773.4L832.6,772.1L835.0,767.8M839.7,775.0L841.5,772.0M859.4,727.7L857.8,729.6M859.4,727.7L861.1,729.9L863.0,731.8L865.7,732.7M857.8,729.6L857.9,732.0L857.2,734.4L857.9,736.8M863.9,735.3L865.3,733.8M863.9,735.3L861.6,737.4M861.6,737.4L857.9,736.8M865.7,732.7L865.3,733.8M867.5,739.5L867.2,737.4L866.1,735.7L865.3,733.8M867.5,739.5L866.3,741.7M866.1,741.7L866.3,741.7M866.1,741.7L866.0,739.3L865.1,737.3L863.9,735.3M862.6,741.7L866.1,741.7M862.6,741.7L861.8,740.4L861.5,739.0L861.6,737.4M871.2,738.4L867.5,739.5M871.2,738.4L870.6,737.0M870.6,737.0L869.1,735.6L867.8,734.0L866.3,732.6M866.3,732.6L865.7,732.7M794.4,716.2L797.0,717.0L799.6,717.2L802.3,717.6M808.8,711.0L809.2,712.3M802.3,717.6L805.1,716.5L807.3,714.6L809.2,712.3M834.3,756.9L833.4,758.1L832.0,758.7L830.7,759.4M829.3,763.5L830.0,761.1M829.3,763.5L832.0,765.2M830.7,759.4L830.0,761.1M822.1,770.3L822.6,769.4M829.3,763.5L827.5,764.3L826.1,765.7L824.8,767.2M822.6,769.4L824.8,767.2M830.0,761.1L827.0,761.0L824.8,758.7L822.1,757.9M824.8,767.2L823.0,764.3L823.0,761.0L822.1,757.9M808.2,735.6L809.4,732.9M809.4,732.9L813.3,732.5L815.6,728.6L819.5,728.1M819.5,728.1L819.9,729.5L821.0,730.7L821.7,732.0M810.8,741.6L812.7,741.6L814.4,740.8L816.0,739.7M821.7,732.0L821.1,734.5M821.1,734.5L819.7,737.4M819.7,737.4L818.7,738.6L817.2,738.8L816.0,739.7M810.5,743.1L814.4,746.2L819.6,746.3L823.6,748.9M823.6,748.9L825.2,747.2M816.0,739.7L818.7,742.6L822.6,744.1L825.2,747.2M821.7,732.0L824.4,731.7L827.0,732.3L829.6,733.0M821.1,734.5L823.6,735.9L825.0,738.7L827.7,739.7M829.6,733.0L831.5,735.2M827.7,739.7L828.7,738.0L830.1,736.7L831.5,735.2M819.7,737.4L821.9,739.7L823.6,742.3L826.0,744.3M827.7,739.7L826.7,741.0L826.5,742.7L826.0,744.3M830.1,747.2L829.8,746.9M823.6,748.9L823.0,751.3M830.7,759.4L828.8,756.0L824.8,754.7L823.0,751.3M825.2,747.2L826.3,746.4M829.8,746.9L826.3,746.4M838.3,741.2L836.4,738.8M829.8,746.9L832.3,744.5L833.6,741.0L836.4,738.8M826.3,746.4L826.0,744.3M886.1,757.4L889.6,758.9M900.2,772.6L900.1,773.9L900.6,775.2L900.9,776.5M870.3,701.3L869.1,699.0L869.8,696.2L868.7,693.9M877.7,701.0L877.3,701.9M874.4,703.8L876.8,702.3M868.7,693.9L872.0,693.3M877.3,701.9L876.8,702.3M845.7,784.0L845.0,785.9L844.3,787.8L843.6,789.7M845.7,784.0L847.0,783.0L848.8,783.4L850.2,782.4M850.2,782.4L851.8,785.0L852.8,788.0L855.2,790.2M843.6,789.7L847.2,789.5L850.3,791.7L853.7,792.1M853.7,792.1L855.2,790.2M837.8,793.6L839.6,792.1L841.7,791.1L843.6,789.7M840.3,776.9L841.9,779.4L843.3,782.1L845.7,784.0M853.9,770.7L852.9,773.0L853.9,775.6L853.0,778.0M853.0,778.0L851.6,779.2L851.5,781.2L850.2,782.4M853.0,801.5L853.8,798.7M853.8,798.7L853.0,796.5L853.5,794.3L853.7,792.1M860.2,783.7L859.9,785.5L858.8,787.0L858.6,788.8M860.2,783.7L858.2,782.2L856.0,781.0L854.1,779.3M854.1,779.3L854.6,782.8L855.5,786.2L857.7,789.0M858.6,788.8L857.7,789.0M865.1,778.7L863.3,780.2L861.6,781.9L860.2,783.7M853.0,778.0L854.1,779.3M855.2,790.2L857.7,789.0M876.3,809.4L873.4,808.2M873.4,808.2L872.0,804.3L868.3,801.9L866.4,798.2M878.0,795.3L876.9,794.2L875.1,794.3L873.9,793.3M873.9,793.3L872.2,793.2L871.0,791.8L869.4,791.5M866.4,798.2L867.0,794.4M867.0,794.4L867.8,792.4M869.4,791.5L867.8,792.4M864.1,821.6L867.3,816.8L871.8,813.4L876.4,810.1M858.6,808.1L863.6,808.2L868.5,806.8L873.4,808.2M858.2,806.9L860.8,803.8L863.4,800.8L866.4,798.2M879.8,782.6L878.9,786.7L875.6,789.6L873.9,793.3M919.4,794.8L920.4,796.0M919.4,794.8L915.5,791.7L911.0,789.3L907.9,785.2M870.4,783.0L869.5,785.8L869.9,788.7L869.4,791.5M853.8,798.7L857.7,795.8L863.0,797.0L867.0,794.4M858.6,788.8L861.8,789.8L865.1,790.3L867.8,792.4M874.6,759.7L871.0,760.4M866.3,762.2L866.4,762.2M871.0,760.4L869.6,761.2L868.0,761.8L866.4,762.2M879.3,756.5L876.4,755.9L874.3,753.9L872.0,752.2M871.0,760.4L870.7,757.6L871.1,754.8L872.0,752.2M811.9,838.0L814.4,838.9L817.2,838.5L819.7,839.7M811.9,838.0L810.8,834.5L811.3,831.2L812.1,827.8M819.7,839.7L816.8,836.0L814.2,832.2L812.9,827.6M812.1,827.8L812.9,827.6M822.6,841.7L819.7,839.7M806.4,842.0L808.3,840.8L810.5,839.8L811.9,838.0M809.2,827.7L812.1,827.8M816.4,825.3L815.1,825.8L814.1,826.8L812.9,827.6M856.1,738.0L855.0,736.5L853.7,735.3L852.2,734.3M856.1,738.0L857.9,736.8M857.8,729.6L856.0,730.2L854.1,730.7L852.4,731.8M852.2,734.3L852.4,731.8M841.9,711.6L842.2,713.5L841.9,715.5L842.5,717.4M841.4,711.5L839.9,712.6L838.2,713.4L836.8,714.7M836.8,714.7L838.0,717.6M842.5,717.4L841.0,717.2L839.5,718.0L838.0,717.6M833.6,704.4L833.5,707.6L835.8,710.2L835.5,713.5M836.8,714.7L835.9,713.9M835.5,713.5L835.9,713.9M830.9,706.7L829.6,709.3M829.6,709.3L829.8,711.3L829.6,713.3L829.9,715.4M835.5,713.5L833.4,713.7L831.9,715.3L829.9,715.4M837.1,725.7L837.2,725.3M837.1,725.7L835.0,725.8L833.1,726.6L831.0,726.6M837.2,725.3L837.1,721.6M831.0,726.6L829.5,725.9L828.6,724.5L827.6,723.2M837.1,721.6L836.9,720.4M836.9,720.4L834.9,719.9L832.8,720.5L830.9,719.7M827.6,723.2L829.0,719.7M829.0,719.7L830.9,719.7M819.5,728.1L819.7,726.8M829.6,733.0L830.6,731.0L829.9,728.6L831.0,726.6M819.7,726.8L820.7,725.8L821.9,725.1L823.2,724.4M823.2,724.4L824.5,723.6L826.3,724.1L827.6,723.2M838.0,717.6L836.9,720.4M835.9,713.9L833.6,715.3L832.0,717.3L830.9,719.7M829.9,715.4L828.3,717.0M828.3,717.0L829.0,719.7M863.7,702.9L860.9,700.6M864.7,698.2L864.7,697.8M864.7,697.8L863.6,699.0L861.9,699.4L860.9,700.6M854.7,704.5L855.9,702.6L857.1,700.9L858.7,699.4M856.8,689.8L857.9,690.7M857.9,690.7L857.8,693.6L859.3,696.4L858.7,699.4M858.7,699.4L860.9,700.6M868.7,693.9L865.8,692.2M864.7,697.8L864.1,695.9L865.4,694.1L864.9,692.2M865.8,692.2L864.9,692.2M857.9,690.7L859.4,690.8L860.8,691.5L862.4,691.5M864.9,692.2L862.4,691.5M877.9,683.7L876.2,683.4L874.3,683.5L872.7,682.6M877.9,683.7L879.6,682.4L881.1,680.8L883.1,679.9M885.6,673.3L885.4,675.8L884.7,678.0L883.1,679.9M885.6,673.3L881.4,672.7L877.2,672.2L873.2,670.6M872.7,682.6L871.5,681.8L870.8,680.5L869.4,680.0M873.2,670.6L870.9,671.4L869.0,672.9L867.2,674.5M869.4,680.0L868.0,678.7M867.2,674.5L867.8,675.8L867.5,677.4L868.0,678.7M878.0,689.5L878.2,687.5L878.0,685.6L877.9,683.7M865.8,692.2L867.5,688.6L869.7,685.3L872.7,682.6M886.8,672.1L885.6,673.3M893.7,692.3L889.9,688.4L886.0,684.6L883.1,679.9M872.6,665.7L872.4,667.4L873.1,669.0L873.2,670.6M862.4,691.5L865.2,687.9L868.1,684.5L869.4,680.0M863.2,671.6L864.5,672.7L866.1,673.2L867.2,674.5M857.0,685.9L860.4,683.0L865.1,682.2L868.0,678.7M879.8,753.8L879.4,752.3M879.4,752.3L879.2,749.8L880.1,747.6L881.1,745.4M889.5,746.0L885.7,744.9M881.1,745.4L882.7,745.4L884.2,745.5L885.7,744.9M881.9,695.5L884.0,696.1L886.1,696.0L888.2,695.8M893.1,693.4L891.8,693.9L890.8,694.9L889.5,695.5M888.2,695.8L889.5,695.5M877.3,701.9L879.9,702.3L881.8,704.4L884.3,705.2M888.2,695.8L887.8,699.3L884.9,701.8L884.3,705.2M899.5,707.2L896.4,708.4L893.2,709.0L889.9,708.3M889.5,695.5L888.1,699.8L890.8,704.0L889.9,708.3M868.3,722.2L870.0,722.5M859.2,724.0L859.4,727.7M866.3,732.6L868.3,731.2M868.3,731.2L869.1,728.3L868.5,725.2L870.0,722.5M871.6,711.2L872.9,713.9M872.9,713.9L871.0,716.4L872.0,719.9L870.0,722.5M870.0,722.5L870.0,722.5M818.0,713.5L819.3,713.4L820.7,713.2L821.9,712.6M818.0,713.5L818.7,716.0M818.7,716.0L820.2,716.9L821.7,717.8L822.6,719.3M821.9,712.6L824.1,713.7M822.6,719.3L823.2,717.7L824.2,716.4L825.7,715.5M824.1,713.7L825.7,715.5M816.2,712.9L816.8,710.9L816.8,708.7L817.0,706.7M816.2,712.9L818.0,713.5M823.1,709.3L821.9,712.6M818.5,725.4L819.7,726.8M818.5,725.4L819.5,722.3L818.9,719.2L818.7,716.0M823.2,724.4L823.1,722.7L822.4,721.1L822.6,719.3M829.6,709.3L828.1,711.1L825.4,711.6L824.1,713.7M828.3,717.0L825.7,715.5M816.2,712.9L813.7,713.4M818.5,725.4L815.5,723.8M815.5,723.8L816.1,720.1L814.2,716.9L813.7,713.4M809.2,712.3L812.1,713.4M813.7,713.4L812.1,713.4M807.4,726.3L809.0,725.5L810.3,724.4L811.5,723.2M807.4,726.3L804.9,724.8M804.9,724.8L803.8,722.8L803.0,720.7L802.8,718.5M802.8,718.5L805.3,719.8L807.9,721.1L810.9,721.1M811.5,723.2L810.9,721.1M809.4,732.9L809.5,730.5L807.8,728.6L807.4,726.3M815.5,723.8L814.1,724.0L812.8,723.5L811.5,723.2M795.7,730.9L798.1,727.9L802.5,727.9L804.9,724.8M802.3,717.6L802.8,718.5M812.1,713.4L812.1,716.0L810.6,718.4L810.9,721.1M820.6,753.4L819.8,755.5M820.6,753.4L816.7,752.7L813.7,749.5L809.6,749.3M819.8,755.5L818.0,757.5M818.0,757.5L815.1,758.2L812.0,758.2L809.3,759.6M807.6,753.2L808.4,752.0L809.2,750.7L809.6,749.3M807.6,753.2L808.4,754.7L808.6,756.4L808.4,758.1M808.4,758.1L809.3,759.6M823.0,751.3L820.6,753.4M822.1,757.9L819.8,755.5M810.4,743.3L810.3,745.3L809.3,747.2L809.6,749.3M822.6,769.4L822.2,765.0L820.1,761.2L818.0,757.5M809.2,767.4L809.4,764.8L808.4,762.2L809.3,759.6M794.1,750.4L798.3,752.7L803.0,752.8L807.6,753.2M795.5,759.9L799.8,759.7L804.2,759.8L808.4,758.1M928.5,774.5L925.9,772.7M928.5,774.5L930.0,776.2L930.6,778.3L931.9,780.1M925.9,772.7L924.9,775.5L924.1,778.2L924.0,781.2M924.0,781.2L926.6,780.6L929.0,781.9L931.6,781.7M931.9,780.1L931.6,781.7M931.6,781.7L931.6,781.7M936.7,766.4L933.2,768.3L931.0,771.6L928.5,774.5M919.3,764.1L918.7,765.0M918.7,765.0L921.7,767.0L922.7,770.9L925.9,772.7M934.6,776.9L934.0,778.2L933.0,779.2L931.9,780.1M918.7,765.0L917.1,765.8L916.0,767.2L914.7,768.4M913.5,782.4L917.0,781.6L920.6,782.3L924.0,781.2M919.4,794.8L923.9,790.8L926.3,784.9L931.6,781.7M936.9,788.0L934.8,786.2L933.8,783.4L931.6,781.7M872.9,713.9L874.5,714.9L876.5,714.6L878.0,715.8M881.7,723.9L878.8,723.8L876.0,723.3L873.1,723.6M881.7,723.9L882.0,721.8M873.1,723.6L870.0,722.5M878.0,715.8L879.6,717.6L881.3,719.4L882.0,721.8M871.2,750.1L871.3,751.1M871.2,750.1L869.5,749.7L868.1,748.6L866.4,748.7M871.3,751.1L869.3,753.0L868.5,755.7L866.4,757.4M866.4,748.7L865.6,749.0M865.6,749.0L864.8,751.6M864.8,751.6L864.8,753.7L865.6,755.6L866.4,757.4M873.6,748.1L875.7,749.2L877.7,750.5L879.4,752.3M873.6,748.1L871.2,750.1M872.0,752.2L871.3,751.1M874.6,742.9L872.5,743.7L870.3,743.6L868.1,743.8M874.6,742.9L874.4,744.6L874.2,746.4L873.6,748.1M868.1,743.8L867.1,745.3L866.6,746.9L866.4,748.7M866.4,762.2L866.4,760.6L866.9,759.0L866.4,757.4M862.5,747.1L865.6,749.0M868.1,743.8L866.3,741.7M862.6,741.7L861.6,743.0M861.6,752.4L864.8,751.6M910.1,741.4L912.6,739.1L915.3,736.9L916.6,733.6M910.1,741.4L909.0,741.9M916.6,733.6L913.6,733.5L910.9,734.5L908.2,735.4M913.7,725.2L914.9,727.8L916.3,730.4L918.3,732.5M918.3,732.5L916.6,733.6M885.0,735.1L883.2,737.5M885.7,744.9L885.3,742.3L884.7,739.8L883.2,737.5M917.0,753.0L915.1,752.3L913.3,751.4L911.7,750.4M922.4,734.2L921.5,734.3M922.4,734.2L926.3,736.0L928.6,740.0L932.7,741.4M921.5,734.3L920.0,736.0L919.7,738.3L918.7,740.2M918.7,740.2L919.3,743.3L920.4,746.4L919.9,749.7M919.9,749.7L925.2,748.4L928.8,744.7L932.7,741.4M927.9,725.5L925.1,727.8L924.0,731.2L922.4,734.2M918.3,732.5L921.5,734.3M938.3,741.9L936.5,741.7L934.6,741.2L932.7,741.4M910.1,741.4L913.1,741.8L915.9,741.3L918.7,740.2M919.8,750.0L919.9,749.7M856.1,738.0L854.8,741.7M852.2,734.3L850.4,735.8M850.4,735.8L852.1,737.6L853.3,739.7L854.8,741.7M855.0,742.9L854.6,742.4M852.4,742.4L852.5,742.4M852.5,742.4L854.6,742.4M854.8,741.7L854.6,742.4M846.1,739.7L846.6,738.3L846.2,736.9L846.2,735.5M846.1,739.7L847.5,739.6L848.7,739.0L850.0,738.6M846.2,735.5L850.0,736.0M850.0,738.6L850.0,736.0M845.4,741.4L846.1,739.7M852.5,742.4L852.0,740.9L850.4,740.1L850.0,738.6M850.4,735.8L850.0,736.0M845.0,741.3L843.4,740.2L842.5,738.7L842.0,737.0M846.2,735.5L844.9,734.0M844.9,734.0L844.0,735.0L843.0,736.1L842.0,737.0M836.4,738.8L836.4,738.8M842.0,737.0L839.9,737.0L838.0,737.5L836.4,738.8M831.5,735.2L834.8,736.1M836.4,738.8L834.8,736.1M838.2,727.3L837.1,725.7M838.2,727.3L838.0,730.0L835.9,732.2L835.7,734.9M835.7,734.9L834.8,736.1M844.3,725.9L842.9,726.6L841.3,726.9L840.1,727.8M844.3,725.9L845.7,726.4L846.9,727.4L848.5,727.8M840.1,727.8L841.9,728.9L842.7,730.9L843.9,732.5M848.5,727.8L848.6,729.2M848.6,729.2L847.4,730.6L846.2,731.9L844.7,732.9M843.9,732.5L844.7,732.9M838.2,727.3L840.1,727.8M835.7,734.9L838.3,733.7L841.1,733.1L843.9,732.5M850.1,725.0L848.5,727.8M852.4,731.8L851.1,730.9L849.9,730.0L848.6,729.2M844.9,734.0L844.7,732.9M846.2,718.1L846.6,719.8M846.2,718.1L844.9,718.1M844.9,718.1L843.7,719.1L842.7,720.2L841.9,721.6M846.6,719.8L845.4,720.8L844.8,722.2L844.1,723.6M841.9,721.6L842.4,723.1M844.1,723.6L842.4,723.1M849.0,722.6L846.6,719.8M847.4,716.5L846.2,718.1M842.5,717.4L844.9,718.1M837.1,721.6L838.7,721.3L840.3,721.7L841.9,721.6M844.3,725.9L844.1,723.6M837.2,725.3L838.9,724.5L840.5,723.5L842.4,723.1M883.4,727.7L881.8,729.2L880.1,730.6L878.0,731.5M883.4,727.7L884.5,728.4M883.2,737.5L880.5,738.6M878.0,731.5L878.8,733.9L880.4,736.0L880.5,738.6M881.1,745.4L879.4,744.1L877.6,743.0L875.9,741.7M880.5,738.6L879.3,740.1L877.6,740.9L875.9,741.7M874.6,742.9L875.7,741.6M871.2,738.4L872.3,739.9L874.0,740.4L875.5,741.3M875.5,741.3L875.7,741.6M875.7,741.6L875.9,741.7M875.6,740.8L874.9,737.9L876.2,735.2L876.3,732.4M875.6,740.8L874.8,738.6L872.9,736.9L872.3,734.6M876.3,732.4L873.8,731.7M872.3,734.6L873.3,731.8M873.8,731.7L873.3,731.8M878.0,731.5L876.3,732.4M875.5,741.3L875.6,740.8M870.6,737.0L872.3,734.6M881.7,723.9L882.3,725.2L883.1,726.4L883.4,727.7M873.1,723.6L873.3,726.3L873.0,729.1L873.8,731.7M868.3,731.2L870.0,731.1L871.7,731.2L873.3,731.8M885.0,706.2L887.8,708.1M885.0,706.2L884.0,707.4L882.5,707.8L881.3,708.7M887.8,708.1L886.0,710.0L883.5,710.5L881.4,711.8M881.3,708.7L880.7,710.5M880.7,710.5L881.3,711.8M881.3,711.8L881.4,711.8M884.3,705.2L885.0,706.2M889.9,708.3L889.4,708.6M889.4,708.6L887.8,708.1M876.8,702.3L877.8,704.8L879.4,706.9L881.3,708.7M873.6,707.6L875.9,708.9L878.7,708.7L880.7,710.5M878.0,715.8L879.0,714.4L880.0,712.9L881.3,711.8M892.1,717.7L891.2,715.3L889.6,713.2L889.2,710.7M892.1,717.7L889.7,718.9L886.8,718.0L884.4,719.4M889.2,710.7L887.4,711.6L886.7,713.7L885.0,714.6M884.4,719.4L884.9,717.8L884.3,716.1L885.0,714.6M892.6,717.9L892.1,717.7M889.4,708.6L889.2,710.7M882.0,721.8L884.4,719.4M881.4,711.8L882.7,712.6L883.4,714.1L885.0,714.6' fill='none' stroke='#f0f1f4' stroke-width='0.75' stroke-linejoin='round'/>
<polygon points='798.5,735.5 803.5,735.8 802,741.5 800.5,742' fill='#4a2a9c'/>
<polygon points='811.5,764 815.5,759.5 816.5,761.5 812.5,766' fill='#8a6ccc'/>
<polygon points='1464.7,822.0 1471.2,801.8 1472.8,766.2 1479.3,733.9 1495.5,716.0 1511.6,699.9 1534.0,711.0 1531.0,752.0 1523.0,753.0 1523.0,790.0 1542.0,789.0 1549.0,811.0 1533.0,821.0 1512.0,828.0 1487.0,828.0' fill='#e3e2e4'/>
<polygon points='1534.0,711.0 1540.0,700.0 1544.0,692.0 1558.6,698.3 1552.0,717.7 1568.3,727.4 1574.7,700.0 1574.7,653.0 1592.5,651.3 1600.0,656.0 1610.3,664.3 1623.3,651.3 1647.6,653.0 1662.1,662.7 1665.4,680.5 1681.5,695.0 1699.4,688.5 1717.2,685.3 1726.9,691.8 1748.0,699.9 1760.9,695.0 1777.1,677.2 1786.8,674.0 1793.3,682.1 1798.1,693.4 1809.4,699.9 1819.2,698.3 1817.5,714.4 1812.7,730.6 1803.0,743.6 1807.8,753.3 1817.5,769.4 1809.4,777.5 1803.0,759.7 1790.0,753.3 1786.8,745.2 1775.5,756.5 1783.6,763.0 1785.2,772.7 1793.3,798.6 1794.9,813.1 1783.6,834.2 1767.4,848.7 1752.8,856.8 1733.0,861.8 1737.6,872.6 1748.4,892.6 1745.3,905.0 1728.3,920.4 1714.4,900.4 1709.0,912.0 1712.0,932.0 1722.1,957.5 1714.4,954.4 1706.0,944.0 1697.4,922.0 1700.5,895.7 1695.9,877.2 1683.5,880.3 1683.5,864.9 1678.9,852.5 1660.0,848.0 1634.0,865.0 1617.0,886.0 1598.0,906.0 1593.0,862.0 1586.0,831.0 1586.0,817.0 1582.8,808.3 1565.0,797.0 1542.0,789.0 1531.0,752.0' fill='#e3e2e4'/>
<polygon points='1548,699 1557,697 1555,708 1561,721 1567,726 1571,712 1570,696 1565,690 1553,690' fill='#f7f7f7'/>
<path d='M1574.7,690 Q1600,700 1610,690 T1665,686 M1610,664 L1620,700 L1600,742 M1665,686 Q1700,720 1690,760 Q1700,790 1720,800 M1692,694 Q1720,740 1740,740 Q1760,730 1780,716 L1800,708 M1700,818 Q1710,850 1720,860 L1733,862 M1705,880 L1715,900 M1723,870 L1738,900 M1503,702 Q1510,720 1530,730 M1479,734 L1500,730 L1530,740 M1468,800 L1500,802 L1520,812 M1540,700 L1560,740 L1575,760 L1580,790' fill='none' stroke='#f0f1f3' stroke-width='0.9'/>
<polygon points='1571.5,777.5 1587.7,779.2 1599.0,774.3 1610.3,763.0 1618.4,753.3 1624.9,750.0 1631.4,751.7 1634.6,763.0 1623.3,766.2 1624.9,777.5 1610.3,795.3 1597.4,800.2 1594.2,809.9 1582.8,808.3 1565.0,797.0 1571.5,788.9' fill='#ddd3ec'/>
<polygon points='1571.5,774.3 1578.0,751.7 1582.8,746.8 1600.6,741.9 1612.0,743.0 1620.0,741.9 1618.4,753.3 1610.3,763.0 1599.0,774.3 1587.7,779.2' fill='#5c38b2'/>
<polygon points='1623.3,766.2 1630.0,764.0 1637.9,766.2 1639.5,779.2 1637.9,795.3 1646.5,812.4 1660.4,820.0 1666.5,815.4 1683.5,815.4 1695.9,810.8 1700.5,817.0 1689.7,830.9 1680.4,844.8 1677.4,851.0 1668.1,844.8 1658.8,847.9 1646.5,854.0 1634.1,864.9 1620.2,874.1 1617.1,886.5 1606.3,901.9 1598.6,906.5 1595.5,895.7 1593.2,861.8 1595.5,834.0 1586.3,830.9 1586.3,817.0 1595.5,815.4 1594.2,809.9 1597.4,800.2 1610.3,795.3 1624.9,777.5' fill='#4f2b9c'/>
<polygon points='1664,821 1672,817 1679,823 1680,836 1677,847 1670,845 1665,836' fill='#7156b8' stroke='#c9bde6' stroke-width='0.5'/>
<ellipse cx='1613.5' cy='912' rx='4.2' ry='8' fill='#e3e2e4'/>
<polygon points='1682,935 1690,938 1706,955 1720,975 1731,990 1726,992 1712,978 1697,960 1686,945' fill='#e3e2e4'/>
<polygon points='1748,958 1768,945 1787,932 1795,938 1789,944 1796,958 1784,982 1760,980 1750,970' fill='#e3e2e4'/>
<polygon points='1730,995 1745,996 1762,999 1760,1002 1740,1001 1730,998' fill='#e3e2e4'/>
<polygon points='1807,956 1828,953 1822,960 1810,962 1818,968 1820,980 1815,975 1806,990 1803,975' fill='#e3e2e4'/>
<polygon points='1862,956 1874,955 1878,965 1892,968 1897,958 1913,956 1919,982 1905,983 1890,972 1873,968' fill='#e3e2e4'/>
<polygon points='1837,971 1851,969 1852,972 1838,974' fill='#e3e2e4'/>
<ellipse cx='1750.7' cy='867.5' rx='4' ry='3.3' fill='#e3e2e4'/>
<ellipse cx='1795.5' cy='840.5' rx='2.6' ry='7' fill='#e3e2e4'/>
<polygon points='1846.7,709.6 1858,716 1850,721 1845,727.4 1844,716' fill='#e3e2e4'/>
<polygon points='1848,733 1853,736 1855,756 1848,765 1838,772 1826,779 1823,782 1827,792 1823,788 1820,780 1832,770 1846,758 1850,745' fill='#e3e2e4'/>
<polygon points='1797.6,868.8 1804.7,870 1805.9,877 1802.4,885.3 1803.5,892.4 1800,893.5 1795.3,883 1797.6,873.5' fill='#8066c6'/>
<polygon points='1825.9,913.5 1830.6,920.6 1828.2,931.2 1821.2,930 1818.8,920.6 1816.5,920.6 1810.6,927.6 1811,922 1818,916' fill='#8066c6'/>
<polygon points='1808,904 1813,905 1810,912 1806,907' fill='#8066c6'/>
<polygon points='1820,898 1824,902 1822,907 1818,903' fill='#8066c6'/>
<polygon points='1812,912 1816,915 1814,917' fill='#8066c6'/>
<polygon points='1800,896 1804,898 1802,901' fill='#8066c6'/>
<path d='M1796.5,910 L1787.6,921.8' stroke='#8066c6' stroke-width='1.2'/><defs><linearGradient id='lg1' x1='0' x2='1' y1='0' y2='0'><stop offset='0.0' stop-color='#ddd0ee'/><stop offset='0.1111111111111111' stop-color='#ddd0ee'/><stop offset='0.1111111111111111' stop-color='#c9b2ea'/><stop offset='0.2222222222222222' stop-color='#c9b2ea'/><stop offset='0.2222222222222222' stop-color='#bb9de2'/><stop offset='0.3333333333333333' stop-color='#bb9de2'/><stop offset='0.3333333333333333' stop-color='#aa8ad8'/><stop offset='0.4444444444444444' stop-color='#aa8ad8'/><stop offset='0.4444444444444444' stop-color='#8a6cc8'/><stop offset='0.5555555555555556' stop-color='#8a6cc8'/><stop offset='0.5555555555555556' stop-color='#7a5cc0'/><stop offset='0.6666666666666666' stop-color='#7a5cc0'/><stop offset='0.6666666666666666' stop-color='#6a48b8'/><stop offset='0.7777777777777778' stop-color='#6a48b8'/><stop offset='0.7777777777777778' stop-color='#5a37ae'/><stop offset='0.8888888888888888' stop-color='#5a37ae'/><stop offset='0.8888888888888888' stop-color='#4e2a9f'/><stop offset='1.0' stop-color='#4e2a9f'/></linearGradient></defs><rect x='812.3' y='592.1' width='109.60000000000002' height='11.5' fill='url(#lg1)'/>
<defs><linearGradient id='lg2' x1='0' x2='1' y1='0' y2='0'><stop offset='0.0' stop-color='#ddd0ee'/><stop offset='0.1111111111111111' stop-color='#ddd0ee'/><stop offset='0.1111111111111111' stop-color='#c9b2ea'/><stop offset='0.2222222222222222' stop-color='#c9b2ea'/><stop offset='0.2222222222222222' stop-color='#bb9de2'/><stop offset='0.3333333333333333' stop-color='#bb9de2'/><stop offset='0.3333333333333333' stop-color='#aa8ad8'/><stop offset='0.4444444444444444' stop-color='#aa8ad8'/><stop offset='0.4444444444444444' stop-color='#8a6cc8'/><stop offset='0.5555555555555556' stop-color='#8a6cc8'/><stop offset='0.5555555555555556' stop-color='#7a5cc0'/><stop offset='0.6666666666666666' stop-color='#7a5cc0'/><stop offset='0.6666666666666666' stop-color='#6a48b8'/><stop offset='0.7777777777777778' stop-color='#6a48b8'/><stop offset='0.7777777777777778' stop-color='#5a37ae'/><stop offset='0.8888888888888888' stop-color='#5a37ae'/><stop offset='0.8888888888888888' stop-color='#4e2a9f'/><stop offset='1.0' stop-color='#4e2a9f'/></linearGradient></defs><rect x='1720' y='592.4' width='108.29999999999995' height='10.899999999999977' fill='url(#lg2)'/>
<rect x='775.3' y='1245.5' width='9.7' height='9.8' fill='#6633c9'/>
<rect x='894' y='1246' width='8.5' height='9' fill='#c3a9ea'/>
<rect x='763.5' y='1288' width='227.5' height='23.3' fill='#c1a8e9'/>
<rect x='1494.4' y='1312' width='169.8' height='3.2' fill='#7a4fd0'/>
<rect x='1883.3' y='1312' width='154' height='3.2' fill='#5b8fdc'/></svg>
<div class='t' style='left:21.03px;top:12.60px;font-family:"Liberation Sans", sans-serif;font-size:18.7px;font-weight:400;font-style:normal;line-height:18.7px;color:#242424;transform:scaleX(0.9655);transform-origin:0 0;'>File</div>
<div class='t' style='left:84.96px;top:12.60px;font-family:"Liberation Sans", sans-serif;font-size:18.7px;font-weight:700;font-style:normal;line-height:18.7px;color:#242424;transform:scaleX(1.0392);transform-origin:0 0;'>Home</div>
<div class='t' style='left:167.02px;top:12.60px;font-family:"Liberation Sans", sans-serif;font-size:18.7px;font-weight:400;font-style:normal;line-height:18.7px;color:#242424;transform:scaleX(0.9783);transform-origin:0 0;'>Insert</div>
<div class='t' style='left:242.00px;top:12.60px;font-family:"Liberation Sans", sans-serif;font-size:18.7px;font-weight:400;font-style:normal;line-height:18.7px;color:#242424;'>Draw</div>
<div class='t' style='left:315.03px;top:12.60px;font-family:"Liberation Sans", sans-serif;font-size:18.7px;font-weight:400;font-style:normal;line-height:18.7px;color:#242424;transform:scaleX(0.9712);transform-origin:0 0;'>Page Layout</div>
<div class='t' style='left:447.01px;top:12.60px;font-family:"Liberation Sans", sans-serif;font-size:18.7px;font-weight:400;font-style:normal;line-height:18.7px;color:#242424;transform:scaleX(0.9870);transform-origin:0 0;'>Formulas</div>
<div class='t' style='left:553.03px;top:12.60px;font-family:"Liberation Sans", sans-serif;font-size:18.7px;font-weight:400;font-style:normal;line-height:18.7px;color:#242424;transform:scaleX(0.9744);transform-origin:0 0;'>Data</div>
<div class='t' style='left:621.07px;top:12.60px;font-family:"Liberation Sans", sans-serif;font-size:18.7px;font-weight:400;font-style:normal;line-height:18.7px;color:#242424;transform:scaleX(0.9344);transform-origin:0 0;'>Review</div>
<div class='t' style='left:708.00px;top:12.60px;font-family:"Liberation Sans", sans-serif;font-size:18.7px;font-weight:400;font-style:normal;line-height:18.7px;color:#242424;transform:scaleX(0.9756);transform-origin:0 0;'>View</div>
<div class='t' style='left:778.00px;top:12.60px;font-family:"Liberation Sans", sans-serif;font-size:18.7px;font-weight:400;font-style:normal;line-height:18.7px;color:#242424;transform:scaleX(1.0253);transform-origin:0 0;'>Automate</div>
<div class='t' style='left:888.98px;top:12.60px;font-family:"Liberation Sans", sans-serif;font-size:18.7px;font-weight:400;font-style:normal;line-height:18.7px;color:#242424;transform:scaleX(1.0238);transform-origin:0 0;'>Developer</div>
<div class='t' style='left:1002.97px;top:12.60px;font-family:"Liberation Sans", sans-serif;font-size:18.7px;font-weight:400;font-style:normal;line-height:18.7px;color:#242424;transform:scaleX(1.0270);transform-origin:0 0;'>Help</div>
<div class='t' style='left:1072.02px;top:12.60px;font-family:"Liberation Sans", sans-serif;font-size:18.7px;font-weight:400;font-style:normal;line-height:18.7px;color:#242424;transform:scaleX(0.9798);transform-origin:0 0;'>Power Pivot</div>
<div class='t' style='left:2479.00px;top:11.80px;font-family:"Liberation Sans", sans-serif;font-size:18.2px;font-weight:400;font-style:normal;line-height:18.2px;color:#242424;'>Comment</div>
<div class='t' style='left:29.77px;top:105.20px;font-family:"Liberation Sans", sans-serif;font-size:16.0px;font-weight:400;font-style:normal;line-height:16.0px;color:#242424;transform:scaleX(0.9250);transform-origin:0 0;'>Paste</div>
<div class='t' style='left:115.66px;top:57.60px;font-family:"Liberation Sans", sans-serif;font-size:16.0px;font-weight:400;font-style:normal;line-height:16.0px;color:#242424;transform:scaleX(1.0417);transform-origin:0 0;'>Cut</div>
<div class='t' style='left:115.66px;top:93.70px;font-family:"Liberation Sans", sans-serif;font-size:16.0px;font-weight:400;font-style:normal;line-height:16.0px;color:#242424;transform:scaleX(1.0417);transform-origin:0 0;'>Copy</div>
<div class='t' style='left:115.97px;top:130.60px;font-family:"Liberation Sans", sans-serif;font-size:16.0px;font-weight:400;font-style:normal;line-height:16.0px;color:#242424;transform:scaleX(1.0343);transform-origin:0 0;'>Format Painter</div>
<div class='t' style='left:86.90px;top:161.00px;font-family:"Liberation Sans", sans-serif;font-size:14px;font-weight:400;font-style:normal;line-height:14px;color:#242424;transform:scaleX(1.0333);transform-origin:0 0;'>Clipboard</div>
<div class='t' style='left:265.02px;top:66.80px;font-family:"Liberation Sans", sans-serif;font-size:16.2px;font-weight:400;font-style:normal;line-height:16.2px;color:#242424;transform:scaleX(0.9803);transform-origin:0 0;'>Montserrat</div>
<div class='t' style='left:430.00px;top:66.80px;font-family:"Liberation Sans", sans-serif;font-size:16.2px;font-weight:400;font-style:normal;line-height:16.2px;color:#242424;'>11</div>
<div class='t' style='left:389.93px;top:161.00px;font-family:"Liberation Sans", sans-serif;font-size:14px;font-weight:400;font-style:normal;line-height:14px;color:#242424;transform:scaleX(1.0741);transform-origin:0 0;'>Font</div>
<div class='t' style='left:834.40px;top:69.30px;font-family:"Liberation Sans", sans-serif;font-size:16.0px;font-weight:400;font-style:normal;line-height:16.0px;color:#242424;transform:scaleX(1.0278);transform-origin:0 0;'>Wrap Text</div>
<div class='t' style='left:833.31px;top:115.00px;font-family:"Liberation Sans", sans-serif;font-size:16.0px;font-weight:400;font-style:normal;line-height:16.0px;color:#242424;transform:scaleX(1.0893);transform-origin:0 0;'>Merge &amp; Center</div>
<div class='t' style='left:754.80px;top:160.80px;font-family:"Liberation Sans", sans-serif;font-size:14px;font-weight:400;font-style:normal;line-height:14px;color:#242424;transform:scaleX(1.0806);transform-origin:0 0;'>Alignment</div>
<div class='t' style='left:1029.77px;top:66.80px;font-family:"Liberation Sans", sans-serif;font-size:16.2px;font-weight:400;font-style:normal;line-height:16.2px;color:#242424;transform:scaleX(0.9286);transform-origin:0 0;'>General</div>
<div class='t' style='left:1090.20px;top:160.80px;font-family:"Liberation Sans", sans-serif;font-size:14px;font-weight:400;font-style:normal;line-height:14px;color:#242424;transform:scaleX(1.1020);transform-origin:0 0;'>Number</div>
<div class='t' style='left:1264.90px;top:104.80px;font-family:"Liberation Sans", sans-serif;font-size:16.0px;font-weight:400;font-style:normal;line-height:16.0px;color:#242424;transform:scaleX(1.1026);transform-origin:0 0;'>Conditional</div>
<div class='t' style='left:1258.91px;top:127.00px;font-family:"Liberation Sans", sans-serif;font-size:16.0px;font-weight:400;font-style:normal;line-height:16.0px;color:#242424;transform:scaleX(1.0933);transform-origin:0 0;'>Formatting</div>
<div class='t' style='left:1368.58px;top:104.80px;font-family:"Liberation Sans", sans-serif;font-size:16.0px;font-weight:400;font-style:normal;line-height:16.0px;color:#242424;transform:scaleX(1.0239);transform-origin:0 0;'>Format as</div>
<div class='t' style='left:1379.30px;top:127.00px;font-family:"Liberation Sans", sans-serif;font-size:16.0px;font-weight:400;font-style:normal;line-height:16.0px;color:#242424;transform:scaleX(0.9868);transform-origin:0 0;'>Table</div>
<div class='t' style='left:1613.79px;top:70.60px;font-family:"Liberation Sans", sans-serif;font-size:20.1px;font-weight:400;font-style:normal;line-height:20.1px;color:#000;transform:scaleX(1.2063);transform-origin:0 0;'>Normal</div>
<div class='t' style='left:1464.26px;top:109.80px;font-family:"Liberation Sans", sans-serif;font-size:20.1px;font-weight:400;font-style:normal;line-height:20.1px;color:#9c0006;transform:scaleX(1.1353);transform-origin:0 0;'>Bad</div>
<div class='t' style='left:1613.16px;top:109.80px;font-family:"Liberation Sans", sans-serif;font-size:20.1px;font-weight:400;font-style:normal;line-height:20.1px;color:#006100;transform:scaleX(1.1362);transform-origin:0 0;'>Good</div>
<div class='t' style='left:1505.03px;top:161.20px;font-family:"Liberation Sans", sans-serif;font-size:14px;font-weight:400;font-style:normal;line-height:14px;color:#242424;transform:scaleX(0.9730);transform-origin:0 0;'>Styles</div>
<div class='t' style='left:1824.13px;top:106.70px;font-family:"Liberation Sans", sans-serif;font-size:16.0px;font-weight:400;font-style:normal;line-height:16.0px;color:#242424;transform:scaleX(1.0667);transform-origin:0 0;'>Insert</div>
<div class='t' style='left:1882.92px;top:106.70px;font-family:"Liberation Sans", sans-serif;font-size:16.0px;font-weight:400;font-style:normal;line-height:16.0px;color:#242424;transform:scaleX(1.0822);transform-origin:0 0;'>Delete</div>
<div class='t' style='left:1943.95px;top:105.20px;font-family:"Liberation Sans", sans-serif;font-size:16.0px;font-weight:400;font-style:normal;line-height:16.0px;color:#242424;transform:scaleX(1.0480);transform-origin:0 0;'>Format</div>
<div class='t' style='left:1893.50px;top:161.20px;font-family:"Liberation Sans", sans-serif;font-size:14px;font-weight:400;font-style:normal;line-height:14px;color:#242424;transform:scaleX(0.9581);transform-origin:0 0;'>Cells</div>
<div class='t' style='left:2058.30px;top:58.30px;font-family:"Liberation Sans", sans-serif;font-size:16.0px;font-weight:400;font-style:normal;line-height:16.0px;color:#242424;transform:scaleX(1.0615);transform-origin:0 0;'>AutoSum</div>
<div class='t' style='left:2057.85px;top:94.50px;font-family:"Liberation Sans", sans-serif;font-size:16.0px;font-weight:400;font-style:normal;line-height:16.0px;color:#242424;transform:scaleX(1.0526);transform-origin:0 0;'>Fill</div>
<div class='t' style='left:2057.87px;top:131.60px;font-family:"Liberation Sans", sans-serif;font-size:16.0px;font-weight:400;font-style:normal;line-height:16.0px;color:#242424;transform:scaleX(1.0270);transform-origin:0 0;'>Clear</div>
<div class='t' style='left:2184.31px;top:105.20px;font-family:"Liberation Sans", sans-serif;font-size:16.0px;font-weight:400;font-style:normal;line-height:16.0px;color:#242424;transform:scaleX(1.0909);transform-origin:0 0;'>Sort &amp;</div>
<div class='t' style='left:2181.89px;top:127.40px;font-family:"Liberation Sans", sans-serif;font-size:16.0px;font-weight:400;font-style:normal;line-height:16.0px;color:#242424;transform:scaleX(1.1143);transform-origin:0 0;'>Filter</div>
<div class='t' style='left:2251.69px;top:105.20px;font-family:"Liberation Sans", sans-serif;font-size:16.0px;font-weight:400;font-style:normal;line-height:16.0px;color:#242424;transform:scaleX(1.1111);transform-origin:0 0;'>Find &amp;</div>
<div class='t' style='left:2245.85px;top:127.40px;font-family:"Liberation Sans", sans-serif;font-size:16.0px;font-weight:400;font-style:normal;line-height:16.0px;color:#242424;transform:scaleX(1.0455);transform-origin:0 0;'>Select</div>
<div class='t' style='left:2144.91px;top:161.20px;font-family:"Liberation Sans", sans-serif;font-size:14px;font-weight:400;font-style:normal;line-height:14px;color:#242424;transform:scaleX(1.0854);transform-origin:0 0;'>Editing</div>
<div class='t' style='left:2339.00px;top:105.20px;font-family:"Liberation Sans", sans-serif;font-size:16.0px;font-weight:400;font-style:normal;line-height:16.0px;color:#242424;transform:scaleX(1.0741);transform-origin:0 0;'>Add-ins</div>
<div class='t' style='left:2342.80px;top:161.20px;font-family:"Liberation Sans", sans-serif;font-size:14px;font-weight:400;font-style:normal;line-height:14px;color:#242424;transform:scaleX(1.0532);transform-origin:0 0;'>Add-ins</div>
<div class='t' style='left:2428.00px;top:105.20px;font-family:"Liberation Sans", sans-serif;font-size:16.0px;font-weight:400;font-style:normal;line-height:16.0px;color:#242424;transform:scaleX(1.0175);transform-origin:0 0;'>Analyze</div>
<div class='t' style='left:2438.97px;top:127.40px;font-family:"Liberation Sans", sans-serif;font-size:16.0px;font-weight:400;font-style:normal;line-height:16.0px;color:#242424;transform:scaleX(1.0303);transform-origin:0 0;'>Data</div>
<div class='t' style='left:2495.90px;top:105.20px;font-family:"Liberation Sans", sans-serif;font-size:16.0px;font-weight:400;font-style:normal;line-height:16.0px;color:#242424;transform:scaleX(1.1020);transform-origin:0 0;'>Copilot</div>
<div class='t' style='left:8.00px;top:202.00px;font-family:"Liberation Sans", sans-serif;font-size:17.8px;font-weight:400;font-style:normal;line-height:17.8px;color:#242424;transform:scaleX(0.9857);transform-origin:0 0;'>A6</div>
<div class='t' style='left:40.89px;top:270.90px;font-family:"Liberation Sans", sans-serif;font-size:30.5px;font-weight:700;font-style:normal;line-height:30.5px;color:#000;transform:scaleX(1.1096);transform-origin:0 0;'>Our Dashboard</div>
<div class='t' style='left:39.10px;top:314.90px;font-family:"Liberation Sans", sans-serif;font-size:18px;font-weight:400;font-style:normal;line-height:18px;color:#1e1e1e;transform:scaleX(1.1653);transform-origin:0 0;'>This dashboard shows information</div>
<div class='t' style='left:39.10px;top:343.20px;font-family:"Liberation Sans", sans-serif;font-size:18px;font-weight:400;font-style:normal;line-height:18px;color:#1e1e1e;transform:scaleX(1.1911);transform-origin:0 0;'>about the people we're working</div>
<div class='t' style='left:39.10px;top:371.50px;font-family:"Liberation Sans", sans-serif;font-size:18px;font-weight:400;font-style:normal;line-height:18px;color:#1e1e1e;transform:scaleX(1.2084);transform-origin:0 0;'>with and how they benefited.</div>
<div class='t' style='left:40.50px;top:518.50px;font-family:"Liberation Sans", sans-serif;font-size:25.3px;font-weight:700;font-style:normal;line-height:25.3px;color:#6633c9;transform:scaleX(1.1232);transform-origin:0 0;'>About Our Participants</div>
<div class='t' style='left:39.00px;top:602.20px;font-family:"Liberation Sans", sans-serif;font-size:18px;font-weight:400;font-style:normal;line-height:18px;color:#1e1e1e;transform:scaleX(1.1741);transform-origin:0 0;'>This section has information about</div>
<div class='t' style='left:39.00px;top:630.50px;font-family:"Liberation Sans", sans-serif;font-size:18px;font-weight:400;font-style:normal;line-height:18px;color:#1e1e1e;transform:scaleX(1.2000);transform-origin:0 0;'>our participants' demographic</div>
<div class='t' style='left:39.00px;top:658.80px;font-family:"Liberation Sans", sans-serif;font-size:18px;font-weight:400;font-style:normal;line-height:18px;color:#1e1e1e;transform:scaleX(1.1655);transform-origin:0 0;'>characteristics.</div>
<div class='t' style='left:483.32px;top:279.60px;font-family:"Liberation Sans", sans-serif;font-size:30.5px;font-weight:700;font-style:normal;line-height:30.5px;color:#000;transform:scaleX(1.0897);transform-origin:0 0;'>Explore:</div>
<div class='t' style='left:495.22px;top:340.75px;font-family:"Liberation Sans", sans-serif;font-size:17.3px;font-weight:700;font-style:normal;line-height:17.3px;color:#fff;transform:scaleX(1.1757);transform-origin:0 0;'>Monday mornings</div>
<div class='t' style='left:800.30px;top:340.75px;font-family:"Liberation Sans", sans-serif;font-size:17.3px;font-weight:700;font-style:normal;line-height:17.3px;color:#fff;transform:scaleX(1.1708);transform-origin:0 0;'>Saturday afternoons</div>
<div class='t' style='left:1105.50px;top:340.75px;font-family:"Liberation Sans", sans-serif;font-size:17.3px;font-weight:700;font-style:normal;line-height:17.3px;color:#fff;transform:scaleX(1.1585);transform-origin:0 0;'>Sunday evenings</div>
<div class='t' style='left:493.00px;top:485.25px;font-family:"Liberation Sans", sans-serif;font-size:21.3px;font-weight:700;font-style:normal;line-height:21.3px;color:#6633c9;transform:scaleX(1.1361);transform-origin:0 0;'>Where They Live</div>
<div class='t' style='left:491.00px;top:517.90px;font-family:"Liberation Serif", serif;font-size:17.8px;font-weight:400;font-style:italic;line-height:17.8px;color:#1e1e1e;transform:scaleX(1.0242);transform-origin:0 0;'>Zip code</div>
<div class='t' style='left:648.00px;top:590.75px;font-family:"Liberation Sans", sans-serif;font-size:16px;font-weight:400;font-style:normal;line-height:16px;color:#222;transform:scaleX(1.2678);transform-origin:0 0;'># of Participants</div>
<div class='t' style='left:799.76px;top:612.80px;font-family:"Liberation Sans", sans-serif;font-size:16.4px;font-weight:400;font-style:normal;line-height:16.4px;color:#222;transform:scaleX(1.2353);transform-origin:0 0;'>30</div>
<div class='t' style='left:911.50px;top:612.80px;font-family:"Liberation Sans", sans-serif;font-size:16.4px;font-weight:400;font-style:normal;line-height:16.4px;color:#222;transform:scaleX(1.1667);transform-origin:0 0;'>93</div>
<div class='t' style='left:999.90px;top:900.80px;font-family:"Liberation Sans", sans-serif;font-size:10.8px;font-weight:400;font-style:normal;line-height:10.8px;color:#666;transform:scaleX(1.0962);transform-origin:0 0;'>Powered by Bing</div>
<div class='t' style='left:917.70px;top:914.60px;font-family:"Liberation Sans", sans-serif;font-size:10.4px;font-weight:400;font-style:normal;line-height:10.4px;color:#666;transform:scaleX(1.0962);transform-origin:0 0;'>&copy; GeoNames, Microsoft, TomTom</div>
<div class='t' style='left:1347.20px;top:485.25px;font-family:"Liberation Sans", sans-serif;font-size:21.3px;font-weight:700;font-style:normal;line-height:21.3px;color:#6633c9;transform:scaleX(1.1505);transform-origin:0 0;'>Where They're From</div>
<div class='t' style='left:1344.92px;top:517.90px;font-family:"Liberation Serif", serif;font-size:17.8px;font-weight:400;font-style:italic;line-height:17.8px;color:#1e1e1e;transform:scaleX(1.0772);transform-origin:0 0;'>Country of birth</div>
<div class='t' style='left:1549.60px;top:590.75px;font-family:"Liberation Sans", sans-serif;font-size:16px;font-weight:400;font-style:normal;line-height:16px;color:#222;transform:scaleX(1.3252);transform-origin:0 0;'># of Participants</div>
<div class='t' style='left:1715.00px;top:612.80px;font-family:"Liberation Sans", sans-serif;font-size:16.4px;font-weight:400;font-style:normal;line-height:16.4px;color:#222;'>1</div>
<div class='t' style='left:1819.71px;top:612.80px;font-family:"Liberation Sans", sans-serif;font-size:16.4px;font-weight:400;font-style:normal;line-height:16.4px;color:#222;transform:scaleX(0.9882);transform-origin:0 0;'>17</div>
<div class='t' style='left:1945.91px;top:987.30px;font-family:"Liberation Sans", sans-serif;font-size:10.8px;font-weight:400;font-style:normal;line-height:10.8px;color:#666;transform:scaleX(1.0925);transform-origin:0 0;'>Powered by Bing</div>
<div class='t' style='left:1693.00px;top:999.60px;font-family:"Liberation Sans", sans-serif;font-size:10.4px;font-weight:400;font-style:normal;line-height:10.4px;color:#666;transform:scaleX(1.0965);transform-origin:0 0;'>&copy; GeoNames, Microsoft, Navinfo, OpenStreetMap, TomTom, Zenrin</div>
<div class='t' style='left:492.05px;top:1141.90px;font-family:"Liberation Sans", sans-serif;font-size:21.3px;font-weight:700;font-style:normal;line-height:21.3px;color:#6633c9;transform:scaleX(1.1481);transform-origin:0 0;'>How They Identify</div>
<div class='t' style='left:491.40px;top:1173.60px;font-family:"Liberation Serif", serif;font-size:17.8px;font-weight:400;font-style:italic;line-height:17.8px;color:#1e1e1e;transform:scaleX(1.0333);transform-origin:0 0;'>Race &amp; ethnicity</div>
<div class='t' style='left:789.20px;top:1242.70px;font-family:"Liberation Sans", sans-serif;font-size:17.5px;font-weight:400;font-style:normal;line-height:17.5px;color:#222;transform:scaleX(1.2030);transform-origin:0 0;'>Hispanic</div>
<div class='t' style='left:907.09px;top:1242.70px;font-family:"Liberation Sans", sans-serif;font-size:17.5px;font-weight:400;font-style:normal;line-height:17.5px;color:#222;transform:scaleX(1.2102);transform-origin:0 0;'>Not Hispanic</div>
<div class='t' style='left:673.00px;top:1292.30px;font-family:"Liberation Sans", sans-serif;font-size:17.5px;font-weight:400;font-style:normal;line-height:17.5px;color:#222;transform:scaleX(1.2169);transform-origin:0 0;'>Afghani</div>
<div class='t' style='left:1346.80px;top:1142.20px;font-family:"Liberation Sans", sans-serif;font-size:21.3px;font-weight:700;font-style:normal;line-height:21.3px;color:#6633c9;transform:scaleX(1.1200);transform-origin:0 0;'>Age Ranges &amp; Gender</div>
<div class='t' style='left:1346.80px;top:1202.50px;font-family:"Liberation Sans", sans-serif;font-size:17.2px;font-weight:700;font-style:normal;line-height:17.2px;color:#6633c9;transform:scaleX(1.2303);transform-origin:0 0;'>Women:</div>
<div class='t' style='left:1345.84px;top:1231.40px;font-family:"Liberation Sans", sans-serif;font-size:17.9px;font-weight:400;font-style:normal;line-height:17.9px;color:#1e1e1e;transform:scaleX(1.1599);transform-origin:0 0;'>Here are the ages of the</div>
<div class='t' style='left:1345.85px;top:1259.80px;font-family:"Liberation Sans", sans-serif;font-size:17.9px;font-weight:400;font-style:normal;line-height:17.9px;color:#1e1e1e;transform:scaleX(1.1526);transform-origin:0 0;'>109 women:</div>
<div class='t' style='left:1879.57px;top:1202.50px;font-family:"Liberation Sans", sans-serif;font-size:17.2px;font-weight:700;font-style:normal;line-height:17.2px;color:#4a7fd0;transform:scaleX(1.2316);transform-origin:0 0;'>Men:</div>
<div class='t' style='left:1879.84px;top:1231.40px;font-family:"Liberation Sans", sans-serif;font-size:17.9px;font-weight:400;font-style:normal;line-height:17.9px;color:#1e1e1e;transform:scaleX(1.1604);transform-origin:0 0;'>Here are the ages of the</div>
<div class='t' style='left:1879.81px;top:1259.80px;font-family:"Liberation Sans", sans-serif;font-size:17.9px;font-weight:400;font-style:normal;line-height:17.9px;color:#1e1e1e;transform:scaleX(1.1905);transform-origin:0 0;'>78 men:</div>
<div class='t' style='left:156.74px;top:1329.70px;font-family:"Liberation Sans", sans-serif;font-size:18.6px;font-weight:400;font-style:normal;line-height:18.6px;color:#242424;transform:scaleX(1.0628);transform-origin:0 0;'>Merging Datasets</div>
<div class='t' style='left:351.42px;top:1329.70px;font-family:"Liberation Sans", sans-serif;font-size:18.6px;font-weight:400;font-style:normal;line-height:18.6px;color:#242424;transform:scaleX(1.0838);transform-origin:0 0;'>Drop-Down Menus</div>
<div class='t' style='left:557.37px;top:1329.70px;font-family:"Liberation Sans", sans-serif;font-size:18.6px;font-weight:400;font-style:normal;line-height:18.6px;color:#242424;transform:scaleX(1.0339);transform-origin:0 0;'>Clients</div>
<div class='t' style='left:654.70px;top:1329.70px;font-family:"Liberation Sans", sans-serif;font-size:18.6px;font-weight:400;font-style:normal;line-height:18.6px;color:#242424;transform:scaleX(1.0564);transform-origin:0 0;'>Attendance</div>
<div class='t' style='left:791.81px;top:1329.70px;font-family:"Liberation Sans", sans-serif;font-size:18.6px;font-weight:400;font-style:normal;line-height:18.6px;color:#242424;transform:scaleX(0.9939);transform-origin:0 0;'>Surveys</div>
<div class='t' style='left:895.62px;top:1329.70px;font-family:"Liberation Sans", sans-serif;font-size:18.6px;font-weight:400;font-style:normal;line-height:18.6px;color:#242424;transform:scaleX(1.0759);transform-origin:0 0;'>Combined</div>
<div class='t' style='left:1026.40px;top:1329.70px;font-family:"Liberation Sans", sans-serif;font-size:18.6px;font-weight:400;font-style:normal;line-height:18.6px;color:#242424;transform:scaleX(1.0638);transform-origin:0 0;'>Tabulations</div>
<div class='t' style='left:1163.99px;top:1325.80px;font-family:"Liberation Sans", sans-serif;font-size:18.6px;font-weight:700;font-style:normal;line-height:18.6px;color:#242424;transform:scaleX(1.0053);transform-origin:0 0;'>Dashboard</div>
<div class='t' style='left:1299.88px;top:1329.70px;font-family:"Liberation Sans", sans-serif;font-size:18.6px;font-weight:400;font-style:normal;line-height:18.6px;color:#242424;transform:scaleX(1.0151);transform-origin:0 0;'>For Power BI</div>
<div class='t' style='left:202.80px;top:242.20px;font-family:"Liberation Sans", sans-serif;font-size:16.9px;font-weight:400;font-style:normal;line-height:16.9px;color:#217346;'>A</div>
<div class='t' style='left:428.41px;top:242.20px;font-family:"Liberation Sans", sans-serif;font-size:16.9px;font-weight:400;font-style:normal;line-height:16.9px;color:#444;'>B</div>
<div class='t' style='left:534.73px;top:242.20px;font-family:"Liberation Sans", sans-serif;font-size:16.9px;font-weight:400;font-style:normal;line-height:16.9px;color:#444;'>C</div>
<div class='t' style='left:641.55px;top:242.20px;font-family:"Liberation Sans", sans-serif;font-size:16.9px;font-weight:400;font-style:normal;line-height:16.9px;color:#444;'>D</div>
<div class='t' style='left:748.87px;top:242.20px;font-family:"Liberation Sans", sans-serif;font-size:16.9px;font-weight:400;font-style:normal;line-height:16.9px;color:#444;'>E</div>
<div class='t' style='left:856.19px;top:242.20px;font-family:"Liberation Sans", sans-serif;font-size:16.9px;font-weight:400;font-style:normal;line-height:16.9px;color:#444;'>F</div>
<div class='t' style='left:962.01px;top:242.20px;font-family:"Liberation Sans", sans-serif;font-size:16.9px;font-weight:400;font-style:normal;line-height:16.9px;color:#444;'>G</div>
<div class='t' style='left:1069.33px;top:242.20px;font-family:"Liberation Sans", sans-serif;font-size:16.9px;font-weight:400;font-style:normal;line-height:16.9px;color:#444;'>H</div>
<div class='t' style='left:1179.65px;top:242.20px;font-family:"Liberation Sans", sans-serif;font-size:16.9px;font-weight:400;font-style:normal;line-height:16.9px;color:#444;'>I</div>
<div class='t' style='left:1284.97px;top:242.20px;font-family:"Liberation Sans", sans-serif;font-size:16.9px;font-weight:400;font-style:normal;line-height:16.9px;color:#444;'>J</div>
<div class='t' style='left:1389.79px;top:242.20px;font-family:"Liberation Sans", sans-serif;font-size:16.9px;font-weight:400;font-style:normal;line-height:16.9px;color:#444;'>K</div>
<div class='t' style='left:1497.61px;top:242.20px;font-family:"Liberation Sans", sans-serif;font-size:16.9px;font-weight:400;font-style:normal;line-height:16.9px;color:#444;'>L</div>
<div class='t' style='left:1602.43px;top:242.20px;font-family:"Liberation Sans", sans-serif;font-size:16.9px;font-weight:400;font-style:normal;line-height:16.9px;color:#444;'>M</div>
<div class='t' style='left:1710.25px;top:242.20px;font-family:"Liberation Sans", sans-serif;font-size:16.9px;font-weight:400;font-style:normal;line-height:16.9px;color:#444;'>N</div>
<div class='t' style='left:1816.07px;top:242.20px;font-family:"Liberation Sans", sans-serif;font-size:16.9px;font-weight:400;font-style:normal;line-height:16.9px;color:#444;'>O</div>
<div class='t' style='left:1923.89px;top:242.20px;font-family:"Liberation Sans", sans-serif;font-size:16.9px;font-weight:400;font-style:normal;line-height:16.9px;color:#444;'>P</div>
<div class='t' style='left:2029.71px;top:242.20px;font-family:"Liberation Sans", sans-serif;font-size:16.9px;font-weight:400;font-style:normal;line-height:16.9px;color:#444;'>Q</div>
<div class='t' style='left:2137.03px;top:242.20px;font-family:"Liberation Sans", sans-serif;font-size:16.9px;font-weight:400;font-style:normal;line-height:16.9px;color:#444;'>R</div>
<div class='t' style='left:2244.35px;top:242.20px;font-family:"Liberation Sans", sans-serif;font-size:16.9px;font-weight:400;font-style:normal;line-height:16.9px;color:#444;'>S</div>
<div class='t' style='left:2352.17px;top:242.20px;font-family:"Liberation Sans", sans-serif;font-size:16.9px;font-weight:400;font-style:normal;line-height:16.9px;color:#444;'>T</div>
<div class='t' style='left:2457.99px;top:242.20px;font-family:"Liberation Sans", sans-serif;font-size:16.9px;font-weight:400;font-style:normal;line-height:16.9px;color:#444;'>U</div>
<div class='t' style='left:6.50px;top:283.70px;font-family:"Liberation Sans", sans-serif;font-size:16.9px;font-weight:400;font-style:normal;line-height:16.9px;color:#444;'>1</div>
<div class='t' style='left:6.50px;top:316.03px;font-family:"Liberation Sans", sans-serif;font-size:16.9px;font-weight:400;font-style:normal;line-height:16.9px;color:#444;'>2</div>
<div class='t' style='left:7.50px;top:344.37px;font-family:"Liberation Sans", sans-serif;font-size:16.9px;font-weight:400;font-style:normal;line-height:16.9px;color:#444;'>3</div>
<div class='t' style='left:7.50px;top:372.70px;font-family:"Liberation Sans", sans-serif;font-size:16.9px;font-weight:400;font-style:normal;line-height:16.9px;color:#444;'>4</div>
<div class='t' style='left:6.50px;top:401.03px;font-family:"Liberation Sans", sans-serif;font-size:16.9px;font-weight:400;font-style:normal;line-height:16.9px;color:#444;'>5</div>
<div class='t' style='left:6.50px;top:429.36px;font-family:"Liberation Sans", sans-serif;font-size:16.9px;font-weight:400;font-style:normal;line-height:16.9px;color:#217346;'>6</div>
<div class='t' style='left:6.50px;top:489.40px;font-family:"Liberation Sans", sans-serif;font-size:16.9px;font-weight:400;font-style:normal;line-height:16.9px;color:#444;'>7</div>
<div class='t' style='left:7.50px;top:518.70px;font-family:"Liberation Sans", sans-serif;font-size:16.9px;font-weight:400;font-style:normal;line-height:16.9px;color:#444;'>8</div>
<div class='t' style='left:6.50px;top:547.03px;font-family:"Liberation Sans", sans-serif;font-size:16.9px;font-weight:400;font-style:normal;line-height:16.9px;color:#444;'>9</div>
<div class='t' style='left:0.80px;top:575.36px;font-family:"Liberation Sans", sans-serif;font-size:16.9px;font-weight:400;font-style:normal;line-height:16.9px;color:#444;'>10</div>
<div class='t' style='left:0.80px;top:603.70px;font-family:"Liberation Sans", sans-serif;font-size:16.9px;font-weight:400;font-style:normal;line-height:16.9px;color:#444;'>11</div>
<div class='t' style='left:0.80px;top:632.03px;font-family:"Liberation Sans", sans-serif;font-size:16.9px;font-weight:400;font-style:normal;line-height:16.9px;color:#444;'>12</div>
<div class='t' style='left:0.80px;top:660.36px;font-family:"Liberation Sans", sans-serif;font-size:16.9px;font-weight:400;font-style:normal;line-height:16.9px;color:#444;'>13</div>
<div class='t' style='left:0.80px;top:688.70px;font-family:"Liberation Sans", sans-serif;font-size:16.9px;font-weight:400;font-style:normal;line-height:16.9px;color:#444;'>14</div>
<div class='t' style='left:0.80px;top:717.03px;font-family:"Liberation Sans", sans-serif;font-size:16.9px;font-weight:400;font-style:normal;line-height:16.9px;color:#444;'>15</div>
<div class='t' style='left:0.80px;top:745.36px;font-family:"Liberation Sans", sans-serif;font-size:16.9px;font-weight:400;font-style:normal;line-height:16.9px;color:#444;'>16</div>
<div class='t' style='left:0.80px;top:773.69px;font-family:"Liberation Sans", sans-serif;font-size:16.9px;font-weight:400;font-style:normal;line-height:16.9px;color:#444;'>17</div>
<div class='t' style='left:0.80px;top:802.03px;font-family:"Liberation Sans", sans-serif;font-size:16.9px;font-weight:400;font-style:normal;line-height:16.9px;color:#444;'>18</div>
<div class='t' style='left:0.80px;top:830.36px;font-family:"Liberation Sans", sans-serif;font-size:16.9px;font-weight:400;font-style:normal;line-height:16.9px;color:#444;'>19</div>
<div class='t' style='left:0.80px;top:858.69px;font-family:"Liberation Sans", sans-serif;font-size:16.9px;font-weight:400;font-style:normal;line-height:16.9px;color:#444;'>20</div>
<div class='t' style='left:0.80px;top:887.03px;font-family:"Liberation Sans", sans-serif;font-size:16.9px;font-weight:400;font-style:normal;line-height:16.9px;color:#444;'>21</div>
<div class='t' style='left:0.80px;top:915.36px;font-family:"Liberation Sans", sans-serif;font-size:16.9px;font-weight:400;font-style:normal;line-height:16.9px;color:#444;'>22</div>
<div class='t' style='left:0.80px;top:943.69px;font-family:"Liberation Sans", sans-serif;font-size:16.9px;font-weight:400;font-style:normal;line-height:16.9px;color:#444;'>23</div>
<div class='t' style='left:0.80px;top:972.03px;font-family:"Liberation Sans", sans-serif;font-size:16.9px;font-weight:400;font-style:normal;line-height:16.9px;color:#444;'>24</div>
<div class='t' style='left:0.80px;top:1000.36px;font-family:"Liberation Sans", sans-serif;font-size:16.9px;font-weight:400;font-style:normal;line-height:16.9px;color:#444;'>25</div>
<div class='t' style='left:0.80px;top:1028.69px;font-family:"Liberation Sans", sans-serif;font-size:16.9px;font-weight:400;font-style:normal;line-height:16.9px;color:#444;'>26</div>
<div class='t' style='left:0.80px;top:1057.02px;font-family:"Liberation Sans", sans-serif;font-size:16.9px;font-weight:400;font-style:normal;line-height:16.9px;color:#444;'>27</div>
<div class='t' style='left:0.80px;top:1085.36px;font-family:"Liberation Sans", sans-serif;font-size:16.9px;font-weight:400;font-style:normal;line-height:16.9px;color:#444;'>28</div>
<div class='t' style='left:0.80px;top:1113.69px;font-family:"Liberation Sans", sans-serif;font-size:16.9px;font-weight:400;font-style:normal;line-height:16.9px;color:#444;'>29</div>
<div class='t' style='left:1.80px;top:1147.29px;font-family:"Liberation Sans", sans-serif;font-size:16.9px;font-weight:400;font-style:normal;line-height:16.9px;color:#444;'>30</div>
<div class='t' style='left:1.80px;top:1175.62px;font-family:"Liberation Sans", sans-serif;font-size:16.9px;font-weight:400;font-style:normal;line-height:16.9px;color:#444;'>31</div>
<div class='t' style='left:1.80px;top:1203.96px;font-family:"Liberation Sans", sans-serif;font-size:16.9px;font-weight:400;font-style:normal;line-height:16.9px;color:#444;'>32</div>
<div class='t' style='left:1.80px;top:1232.29px;font-family:"Liberation Sans", sans-serif;font-size:16.9px;font-weight:400;font-style:normal;line-height:16.9px;color:#444;'>33</div>
<div class='t' style='left:1.80px;top:1260.62px;font-family:"Liberation Sans", sans-serif;font-size:16.9px;font-weight:400;font-style:normal;line-height:16.9px;color:#444;'>34</div>
<div class='t' style='left:1.80px;top:1288.96px;font-family:"Liberation Sans", sans-serif;font-size:16.9px;font-weight:400;font-style:normal;line-height:16.9px;color:#444;'>35</div><div style='position:absolute;left:1458px;top:67.9px;width:140px;height:34px;overflow:hidden'><div style='position:absolute;left:-1458px;top:-67.9px;width:2560px;height:200px'><div class='t' style='left:1463.50px;top:58.80px;font-family:"Liberation Sans", sans-serif;font-size:34px;font-weight:400;font-style:normal;line-height:34px;color:#44546a;transform:scaleX(1.1100);transform-origin:0 0;'>Title 2</div></div></div>
</body></html>
